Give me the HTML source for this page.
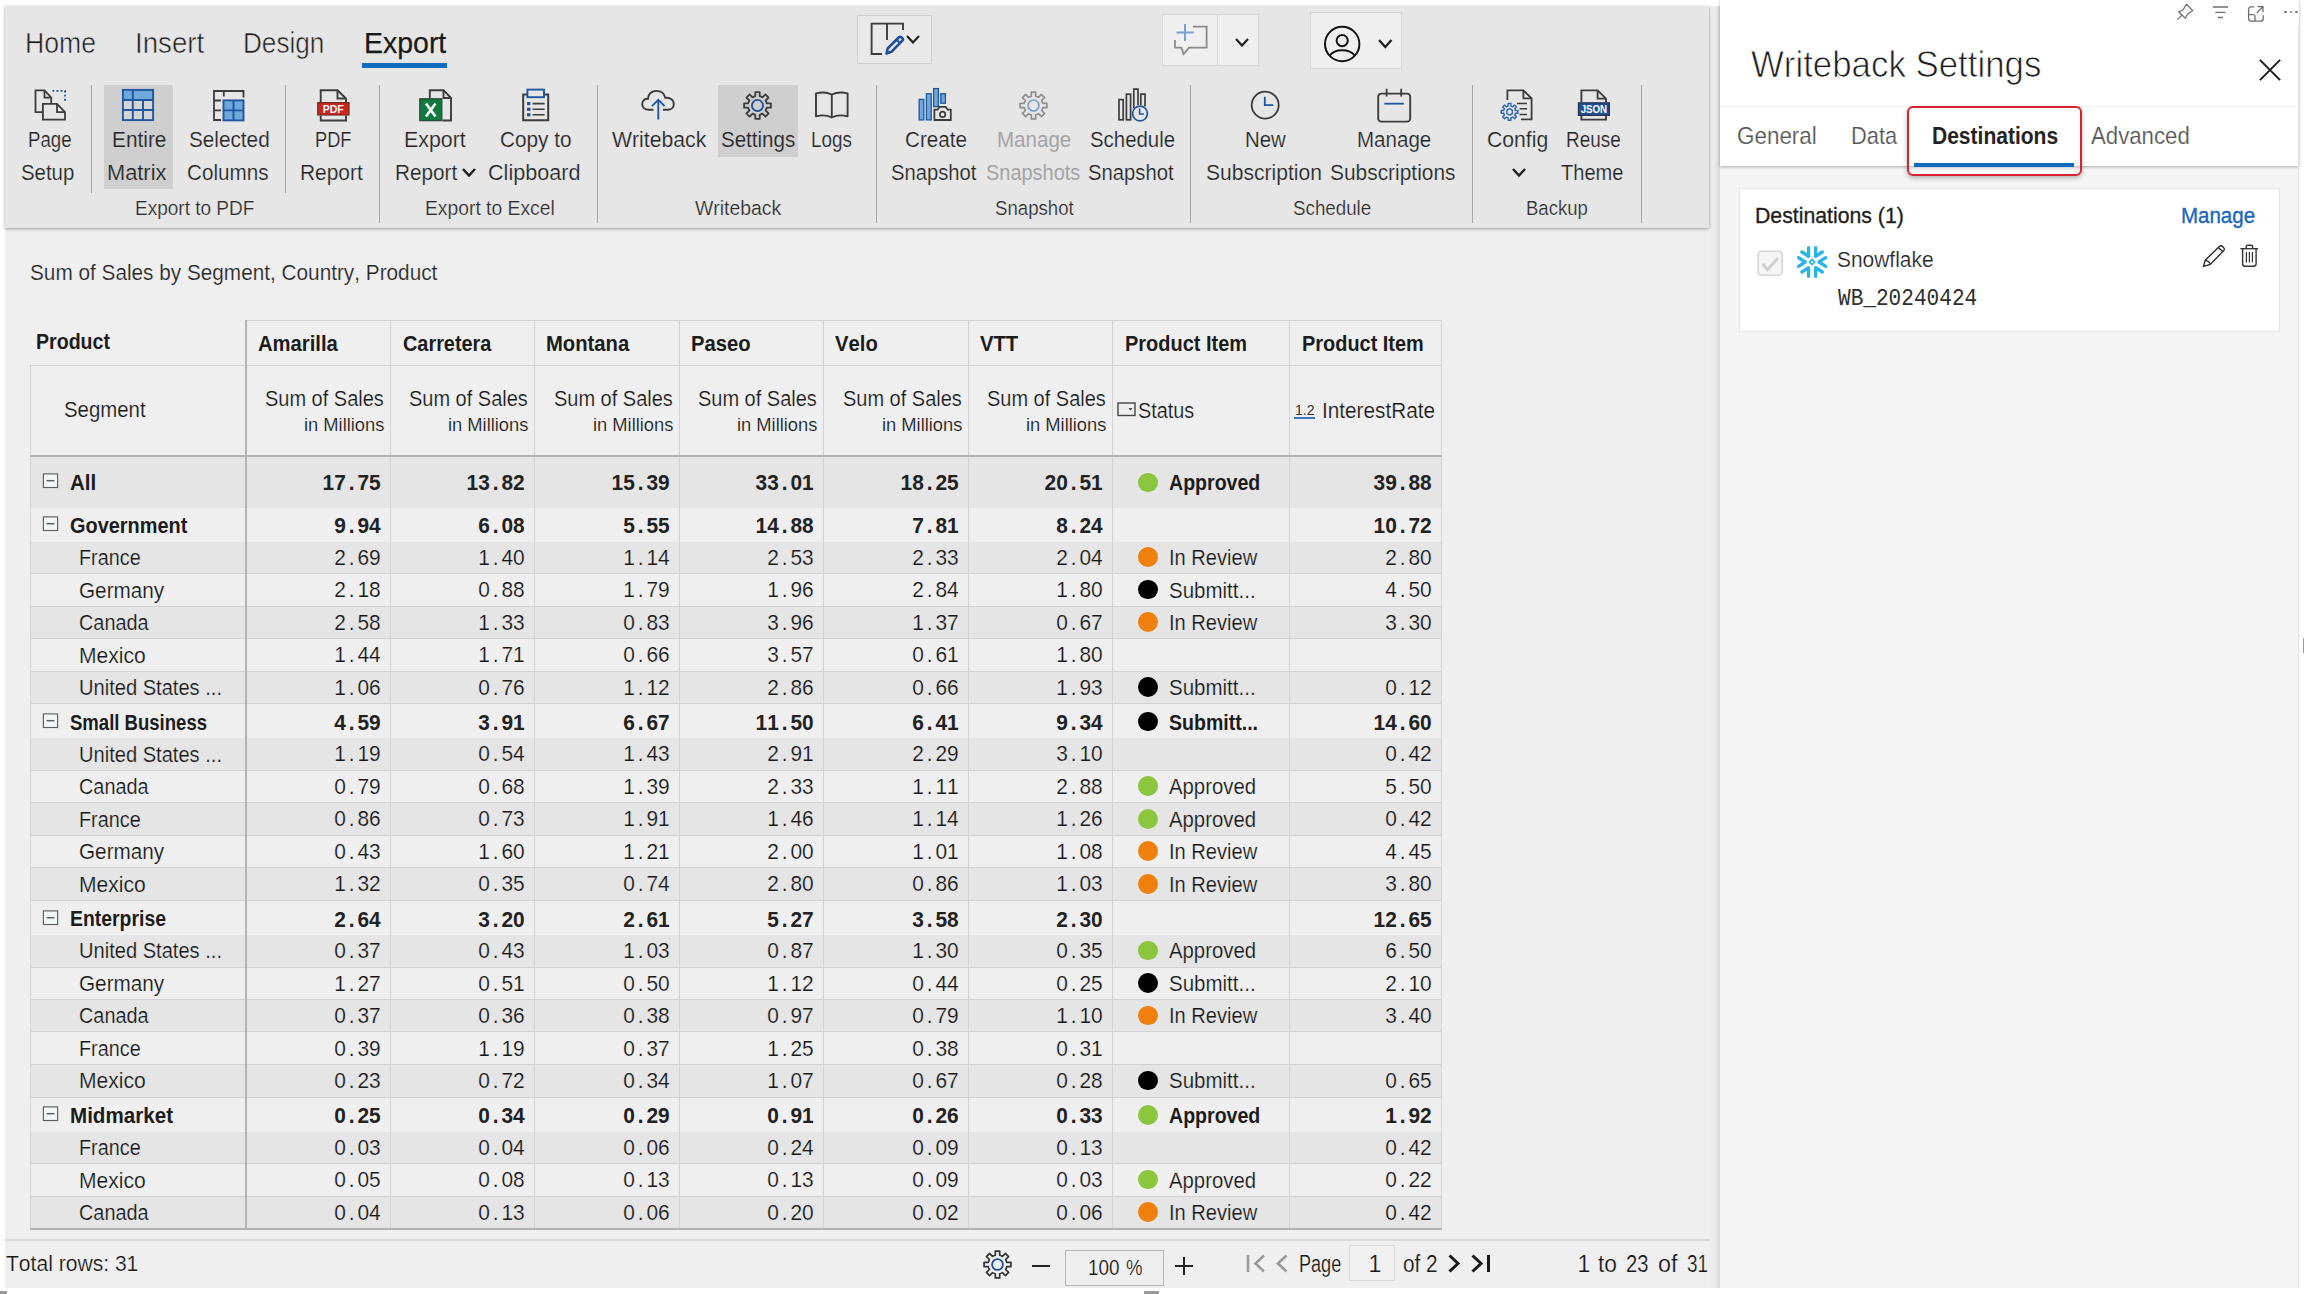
<!DOCTYPE html>
<html><head><meta charset="utf-8"><title>Writeback Settings</title><style>
html,body{margin:0;padding:0;background:#fff;}
body{width:2304px;height:1294px;position:relative;overflow:hidden;font-family:"Liberation Sans",sans-serif;color:#222;font-kerning:none;}
.t{position:absolute;white-space:nowrap;transform-origin:0 0;}
.r{position:absolute;display:block;}
.n i{display:inline-block;font-style:normal;text-align:center;width:12.45px;}
.n{transform:scaleX(0.9315);transform-origin:100% 0;}
</style></head><body>
<div class="r" style="left:5px;top:6px;width:1715px;height:1282px;background:#efefef;"></div>
<div class="r" style="left:1709px;top:6px;width:11px;height:1282px;background:linear-gradient(to right,#eeeeee 0%,#ebebeb 50%,#d8d8d8 100%);"></div>
<div class="r" style="left:5px;top:6px;width:1704px;height:222px;background:#e6e6e6;box-shadow:0 1px 3px rgba(0,0,0,.35);"></div>
<div class="t" style="left:25.00px;top:27.06px;font-size:30.4px;line-height:30.4px;transform:scaleX(0.8755);color:#1e1e1e;-webkit-text-stroke:0.55px #e6e6e6;">Home</div>
<div class="t" style="left:135.40px;top:27.06px;font-size:30.4px;line-height:30.4px;transform:scaleX(0.9105);color:#1e1e1e;-webkit-text-stroke:0.55px #e6e6e6;">Insert</div>
<div class="t" style="left:243.30px;top:27.06px;font-size:30.4px;line-height:30.4px;transform:scaleX(0.8592);color:#1e1e1e;-webkit-text-stroke:0.55px #e6e6e6;">Design</div>
<div class="t" style="left:363.50px;top:27.06px;font-size:30.4px;line-height:30.4px;transform:scaleX(0.9368);color:#1a1a1a;-webkit-text-stroke:0.25px #1a1a1a;">Export</div>
<div class="r" style="left:362px;top:63px;width:85px;height:5px;background:#0f6cbd;"></div>
<div class="r" style="left:857px;top:15px;width:75px;height:49px;background:#e9e9e9;box-sizing:border-box;border:1px solid #cfcfcf;"></div>
<div class="r" style="left:1162px;top:14px;width:97px;height:52px;background:#efefef;box-sizing:border-box;border:1px solid #d6d6d6;"></div>
<div class="r" style="left:1217px;top:15px;width:1px;height:50px;background:#d6d6d6;"></div>
<div class="r" style="left:1310px;top:12px;width:92px;height:57px;background:#efefef;box-sizing:border-box;border:1px solid #d6d6d6;"></div>
<div class="r" style="left:104px;top:85px;width:69px;height:104px;background:#cfcfcf;"></div>
<div class="r" style="left:718px;top:85px;width:80px;height:72px;background:#cfcfcf;"></div>
<div class="r" style="left:91px;top:85px;width:1px;height:108px;background:#a4a4a4;"></div>
<div class="r" style="left:285px;top:85px;width:1px;height:108px;background:#a4a4a4;"></div>
<div class="r" style="left:379px;top:85px;width:1px;height:138px;background:#a4a4a4;"></div>
<div class="r" style="left:597px;top:85px;width:1px;height:138px;background:#a4a4a4;"></div>
<div class="r" style="left:876px;top:85px;width:1px;height:138px;background:#a4a4a4;"></div>
<div class="r" style="left:1190px;top:85px;width:1px;height:138px;background:#a4a4a4;"></div>
<div class="r" style="left:1472px;top:85px;width:1px;height:138px;background:#a4a4a4;"></div>
<div class="r" style="left:1641px;top:85px;width:1px;height:138px;background:#a4a4a4;"></div>
<div class="t" style="left:28.10px;top:129.07px;font-size:22.5px;line-height:22.5px;transform:scaleX(0.8280);color:#252525;-webkit-text-stroke:0.2px #e6e6e6;">Page</div>
<div class="t" style="left:21.40px;top:162.07px;font-size:22.5px;line-height:22.5px;transform:scaleX(0.9068);color:#252525;-webkit-text-stroke:0.2px #e6e6e6;">Setup</div>
<div class="t" style="left:111.50px;top:129.07px;font-size:22.5px;line-height:22.5px;transform:scaleX(0.9255);color:#252525;-webkit-text-stroke:0.2px #cfcfcf;">Entire</div>
<div class="t" style="left:107.30px;top:162.07px;font-size:22.5px;line-height:22.5px;transform:scaleX(0.9697);color:#252525;-webkit-text-stroke:0.2px #cfcfcf;">Matrix</div>
<div class="t" style="left:188.80px;top:129.07px;font-size:22.5px;line-height:22.5px;transform:scaleX(0.9214);color:#252525;-webkit-text-stroke:0.2px #e6e6e6;">Selected</div>
<div class="t" style="left:186.70px;top:162.07px;font-size:22.5px;line-height:22.5px;transform:scaleX(0.9182);color:#252525;-webkit-text-stroke:0.2px #e6e6e6;">Columns</div>
<div class="t" style="left:315.10px;top:129.07px;font-size:22.5px;line-height:22.5px;transform:scaleX(0.8111);color:#252525;-webkit-text-stroke:0.2px #e6e6e6;">PDF</div>
<div class="t" style="left:300.00px;top:162.07px;font-size:22.5px;line-height:22.5px;transform:scaleX(0.9296);color:#252525;-webkit-text-stroke:0.2px #e6e6e6;">Report</div>
<div class="t" style="left:404.40px;top:129.07px;font-size:22.5px;line-height:22.5px;transform:scaleX(0.9489);color:#252525;-webkit-text-stroke:0.2px #e6e6e6;">Export</div>
<div class="t" style="left:395.30px;top:162.07px;font-size:22.5px;line-height:22.5px;transform:scaleX(0.9222);color:#252525;-webkit-text-stroke:0.2px #e6e6e6;">Report</div>
<div class="t" style="left:500.00px;top:129.07px;font-size:22.5px;line-height:22.5px;transform:scaleX(0.9231);color:#252525;-webkit-text-stroke:0.2px #e6e6e6;">Copy to</div>
<div class="t" style="left:487.80px;top:162.07px;font-size:22.5px;line-height:22.5px;transform:scaleX(0.9595);color:#252525;-webkit-text-stroke:0.2px #e6e6e6;">Clipboard</div>
<div class="t" style="left:611.80px;top:129.07px;font-size:22.5px;line-height:22.5px;transform:scaleX(0.9431);color:#252525;-webkit-text-stroke:0.2px #e6e6e6;">Writeback</div>
<div class="t" style="left:721.40px;top:129.07px;font-size:22.5px;line-height:22.5px;transform:scaleX(0.9129);color:#252525;-webkit-text-stroke:0.2px #cfcfcf;">Settings</div>
<div class="t" style="left:811.30px;top:129.07px;font-size:22.5px;line-height:22.5px;transform:scaleX(0.8366);color:#252525;-webkit-text-stroke:0.2px #e6e6e6;">Logs</div>
<div class="t" style="left:904.70px;top:129.07px;font-size:22.5px;line-height:22.5px;transform:scaleX(0.9178);color:#252525;-webkit-text-stroke:0.2px #e6e6e6;">Create</div>
<div class="t" style="left:891.20px;top:162.07px;font-size:22.5px;line-height:22.5px;transform:scaleX(0.8984);color:#252525;-webkit-text-stroke:0.2px #e6e6e6;">Snapshot</div>
<div class="t" style="left:1089.90px;top:129.07px;font-size:22.5px;line-height:22.5px;transform:scaleX(0.9070);color:#252525;-webkit-text-stroke:0.2px #e6e6e6;">Schedule</div>
<div class="t" style="left:1088.30px;top:162.07px;font-size:22.5px;line-height:22.5px;transform:scaleX(0.8994);color:#252525;-webkit-text-stroke:0.2px #e6e6e6;">Snapshot</div>
<div class="t" style="left:1245.00px;top:129.07px;font-size:22.5px;line-height:22.5px;transform:scaleX(0.9055);color:#252525;-webkit-text-stroke:0.2px #e6e6e6;">New</div>
<div class="t" style="left:1205.60px;top:162.07px;font-size:22.5px;line-height:22.5px;transform:scaleX(0.9361);color:#252525;-webkit-text-stroke:0.2px #e6e6e6;">Subscription</div>
<div class="t" style="left:1357.40px;top:129.07px;font-size:22.5px;line-height:22.5px;transform:scaleX(0.9135);color:#252525;-webkit-text-stroke:0.2px #e6e6e6;">Manage</div>
<div class="t" style="left:1330.10px;top:162.07px;font-size:22.5px;line-height:22.5px;transform:scaleX(0.9292);color:#252525;-webkit-text-stroke:0.2px #e6e6e6;">Subscriptions</div>
<div class="t" style="left:1487.10px;top:129.07px;font-size:22.5px;line-height:22.5px;transform:scaleX(0.9412);color:#252525;-webkit-text-stroke:0.2px #e6e6e6;">Config</div>
<div class="t" style="left:1565.80px;top:129.07px;font-size:22.5px;line-height:22.5px;transform:scaleX(0.8412);color:#252525;-webkit-text-stroke:0.2px #e6e6e6;">Reuse</div>
<div class="t" style="left:1560.60px;top:162.07px;font-size:22.5px;line-height:22.5px;transform:scaleX(0.8910);color:#252525;-webkit-text-stroke:0.2px #e6e6e6;">Theme</div>
<div class="t" style="left:997.40px;top:129.07px;font-size:22.5px;line-height:22.5px;transform:scaleX(0.9135);color:#a3a3a3;">Manage</div>
<div class="t" style="left:985.70px;top:162.07px;font-size:22.5px;line-height:22.5px;transform:scaleX(0.8870);color:#a3a3a3;">Snapshots</div>
<div class="t" style="left:134.60px;top:198.47px;font-size:20.5px;line-height:20.5px;transform:scaleX(0.9267);color:#2e2e2e;-webkit-text-stroke:0.2px #e6e6e6;">Export to PDF</div>
<div class="t" style="left:424.50px;top:198.47px;font-size:20.5px;line-height:20.5px;transform:scaleX(0.9408);color:#2e2e2e;-webkit-text-stroke:0.2px #e6e6e6;">Export to Excel</div>
<div class="t" style="left:694.60px;top:198.47px;font-size:20.5px;line-height:20.5px;transform:scaleX(0.9459);color:#2e2e2e;-webkit-text-stroke:0.2px #e6e6e6;">Writeback</div>
<div class="t" style="left:994.80px;top:198.47px;font-size:20.5px;line-height:20.5px;transform:scaleX(0.9086);color:#2e2e2e;-webkit-text-stroke:0.2px #e6e6e6;">Snapshot</div>
<div class="t" style="left:1293.10px;top:198.47px;font-size:20.5px;line-height:20.5px;transform:scaleX(0.9148);color:#2e2e2e;-webkit-text-stroke:0.2px #e6e6e6;">Schedule</div>
<div class="t" style="left:1526.20px;top:198.47px;font-size:20.5px;line-height:20.5px;transform:scaleX(0.9025);color:#2e2e2e;-webkit-text-stroke:0.2px #e6e6e6;">Backup</div>
<svg class="r" style="left:462px;top:168px;" width="14" height="9" viewBox="0 0 14 9"><path d="M1 1 L7.0 7.5 L13 1" fill="none" stroke="#222" stroke-width="2.5"/></svg>
<svg class="r" style="left:1512px;top:168px;" width="14" height="9" viewBox="0 0 14 9"><path d="M1 1 L7.0 7.5 L13 1" fill="none" stroke="#222" stroke-width="2.5"/></svg>
<svg class="r" style="left:34px;top:88px;" width="34" height="34" viewBox="0 0 34 34"><g fill="none" stroke="#3c3c3c" stroke-width="1.8" stroke-linejoin="miter">
<path d="M8.9 24.2 H1.5 V2.4 H10.5 L17.2 9.6 V15.9"/><path d="M10.5 2.4 V9.6 H17.2"/>
<path d="M8.9 15.9 H23 L31 24.2 V31.7 H8.9 Z"/><path d="M23 15.9 V24.2 H31"/>
</g><path d="M18.4 2.9 H31 V15" fill="none" stroke="#1e56a0" stroke-width="1.9" stroke-dasharray="1.9 2.2"/></svg>
<svg class="r" style="left:121px;top:88px;" width="34" height="34" viewBox="0 0 34 34"><rect x="1.5" y="1.5" width="31" height="31" fill="#d4d4d4"/>
<rect x="1.5" y="1.5" width="31" height="10" fill="#6fa8dc"/>
<g fill="none" stroke="#1e56a0" stroke-width="1.9"><rect x="1.9" y="1.9" width="30.2" height="30.2"/>
<path d="M1 12 H33 M1 22 H33 M11.8 1 V33 M22 12 V33"/></g></svg>
<svg class="r" style="left:212px;top:88px;" width="34" height="34" viewBox="0 0 34 34"><g fill="none" stroke="#3c3c3c" stroke-width="1.8"><path d="M2 33 V3 H31.5 V9.5"/><path d="M11.8 3 V8.5"/><path d="M2 12.5 H9 M2 22.3 H9 M2 32 H9"/></g>
<rect x="11.5" y="12.4" width="20" height="20" fill="#6fa8dc" stroke="#1e56a0" stroke-width="1.9"/>
<path d="M21.5 12 V33 M11 22.4 H32" stroke="#1e56a0" stroke-width="1.9"/></svg>
<svg class="r" style="left:316px;top:88px;" width="35" height="35" viewBox="0 0 35 35"><g fill="none" stroke="#3c3c3c" stroke-width="1.9"><path d="M4.7 14 V2.2 H21.5 L30 10.5 V14"/><path d="M21.5 2.2 V10.5 H30"/><path d="M4.7 27.5 V32.5 H30 V27.5"/></g>
<rect x="1.7" y="14.6" width="31.3" height="12.4" fill="#c9261d" stroke="#7a2a25" stroke-width="1.2"/>
<text x="17.3" y="25" font-family="Liberation Sans" font-weight="bold" font-size="10.8" fill="#fff" text-anchor="middle" textLength="21" lengthAdjust="spacingAndGlyphs">PDF</text></svg>
<svg class="r" style="left:418px;top:88px;" width="36" height="35" viewBox="0 0 36 35"><g fill="none" stroke="#3c3c3c" stroke-width="1.9"><path d="M11.8 10.5 V2.2 H25.5 L33 10 V32.5 H24.5"/><path d="M25.5 2.2 V10 H33"/></g>
<rect x="1.8" y="10.8" width="22" height="21.8" fill="#10793f" stroke="#2c4a3a" stroke-width="1.3"/>
<path d="M8 15.5 L17.5 28.5 M17.5 15.5 L8 28.5" stroke="#fff" stroke-width="2.6" fill="none"/></svg>
<svg class="r" style="left:521px;top:87px;" width="30" height="36" viewBox="0 0 30 36"><path d="M6.5 7.5 H2.2 V33.2 H27.2 V7.5 H23" fill="none" stroke="#3c3c3c" stroke-width="2"/>
<rect x="6.4" y="2.6" width="16.6" height="7.6" fill="#e6e6e6" stroke="#1e56a0" stroke-width="1.9"/>
<g fill="#1e56a0"><rect x="6" y="15" width="3.4" height="3.2"/><rect x="6" y="20.7" width="3.4" height="3.2"/><rect x="6" y="26.2" width="3.4" height="3.2"/></g>
<path d="M11.6 16.6 H23.6 M11.6 22.3 H23.6 M11.6 27.8 H23.6" stroke="#3c3c3c" stroke-width="1.6"/></svg>
<svg class="r" style="left:640px;top:88px;" width="37" height="34" viewBox="0 0 37 34"><path d="M13.5 21.8 H9 C4.5 21.8 2.2 19 2.2 16 C2.2 12.6 5 10.6 8 10.8 C8 6 11.8 2.9 16.5 2.9 C21 2.9 24.3 5.6 25.2 9.8 C29.5 9.3 33.8 11.5 33.8 16 C33.8 19.3 31.3 21.8 27.5 21.8 H23" fill="none" stroke="#3c3c3c" stroke-width="1.9"/>
<path d="M18.3 31.5 V12.5 M12 18.2 L18.3 11.9 L24.6 18.2" fill="none" stroke="#1e56a0" stroke-width="1.9"/></svg>
<svg class="r" style="left:743.4px;top:90.7px;" width="29" height="29" viewBox="0 0 29 29"><path d="M12.30 5.24 L12.30 1.08 L16.70 1.08 L16.70 5.24 A9.52 9.52 0 0 1 19.49 6.39 L22.43 3.45 L25.55 6.57 L22.61 9.51 A9.52 9.52 0 0 1 23.76 12.30 L27.92 12.30 L27.92 16.70 L23.76 16.70 A9.52 9.52 0 0 1 22.61 19.49 L25.55 22.43 L22.43 25.55 L19.49 22.61 A9.52 9.52 0 0 1 16.70 23.76 L16.70 27.92 L12.30 27.92 L12.30 23.76 A9.52 9.52 0 0 1 9.51 22.61 L6.57 25.55 L3.45 22.43 L6.39 19.49 A9.52 9.52 0 0 1 5.24 16.70 L1.08 16.70 L1.08 12.30 L5.24 12.30 A9.52 9.52 0 0 1 6.39 9.51 L3.45 6.57 L6.57 3.45 L9.51 6.39 A9.52 9.52 0 0 1 12.30 5.24 Z" fill="none" stroke="#3c3c3c" stroke-width="1.8" stroke-linejoin="round"/><circle cx="14.5" cy="14.5" r="5.60" fill="none" stroke="#1d4f99" stroke-width="1.8"/></svg>
<svg class="r" style="left:814px;top:90px;" width="36" height="30" viewBox="0 0 36 30"><g fill="none" stroke="#3c3c3c" stroke-width="1.9" stroke-linejoin="round"><path d="M17.8 4.5 C13 2.2 7 2.2 2 3.4 V26.4 C7 25 13 25 17.8 27.5 C22.6 25 28.6 25 33.6 26.4 V3.4 C28.6 2.2 22.6 2.2 17.8 4.5 Z"/><path d="M17.8 4.5 V27.5"/></g></svg>
<svg class="r" style="left:917px;top:87px;" width="36" height="35" viewBox="0 0 36 35"><g fill="#6fa8dc" stroke="#1e56a0" stroke-width="1.3">
<rect x="2.2" y="12.4" width="4.6" height="20.5"/><rect x="9.4" y="6.8" width="4.8" height="26.1"/><rect x="16.6" y="1.6" width="4.8" height="18"/><rect x="23.8" y="6.8" width="4.6" height="9.4"/></g>
<path d="M17.4 33 V22.6 H20.6 L22.6 19.8 H28.6 L30.6 22.6 H33.8 V33 Z" fill="#e6e6e6" stroke="#3c3c3c" stroke-width="1.8"/>
<circle cx="25.6" cy="27.4" r="2.7" fill="none" stroke="#3c3c3c" stroke-width="1.7"/></svg>
<svg class="r" style="left:1019.2px;top:90.6px;" width="29" height="29" viewBox="0 0 29 29"><path d="M12.30 5.24 L12.30 1.08 L16.70 1.08 L16.70 5.24 A9.52 9.52 0 0 1 19.49 6.39 L22.43 3.45 L25.55 6.57 L22.61 9.51 A9.52 9.52 0 0 1 23.76 12.30 L27.92 12.30 L27.92 16.70 L23.76 16.70 A9.52 9.52 0 0 1 22.61 19.49 L25.55 22.43 L22.43 25.55 L19.49 22.61 A9.52 9.52 0 0 1 16.70 23.76 L16.70 27.92 L12.30 27.92 L12.30 23.76 A9.52 9.52 0 0 1 9.51 22.61 L6.57 25.55 L3.45 22.43 L6.39 19.49 A9.52 9.52 0 0 1 5.24 16.70 L1.08 16.70 L1.08 12.30 L5.24 12.30 A9.52 9.52 0 0 1 6.39 9.51 L3.45 6.57 L6.57 3.45 L9.51 6.39 A9.52 9.52 0 0 1 12.30 5.24 Z" fill="none" stroke="#8f8f8f" stroke-width="1.7" stroke-linejoin="round"/><circle cx="14.5" cy="14.5" r="5.50" fill="none" stroke="#7a9bcd" stroke-width="1.6"/></svg>
<svg class="r" style="left:1116px;top:87px;" width="36" height="36" viewBox="0 0 36 36"><g fill="none" stroke="#3c3c3c" stroke-width="1.7">
<rect x="3" y="12.6" width="4.2" height="20.2"/><rect x="10.4" y="7.2" width="4.2" height="25.6"/><path d="M17.8 21 V2.2 H22 V18"/><path d="M24.8 18 V7.2 H29 V19.5"/></g>
<circle cx="24" cy="26.5" r="7.4" fill="#e6e6e6" stroke="#1e56a0" stroke-width="1.7"/><path d="M23.6 21.5 V27 H28" fill="none" stroke="#1e56a0" stroke-width="1.6"/></svg>
<svg class="r" style="left:1249px;top:89px;" width="32" height="32" viewBox="0 0 32 32"><circle cx="16.2" cy="16.1" r="13.5" fill="none" stroke="#3c3c3c" stroke-width="1.8"/><path d="M15.8 7.8 V16.2 H24.2" fill="none" stroke="#1e56a0" stroke-width="1.8"/></svg>
<svg class="r" style="left:1375px;top:87px;" width="38" height="37" viewBox="0 0 38 37"><rect x="3.2" y="6.6" width="32" height="28" rx="3.2" fill="none" stroke="#3c3c3c" stroke-width="1.9"/>
<path d="M11.6 1.8 V9.6 M26.2 1.8 V9.6" stroke="#3c3c3c" stroke-width="1.8"/><path d="M9.3 16.7 H28.8" stroke="#1e56a0" stroke-width="1.8"/></svg>
<svg class="r" style="left:1499px;top:88px;" width="36" height="35" viewBox="0 0 36 35"><g fill="none" stroke="#3c3c3c" stroke-width="1.8"><path d="M8.4 12 V2.4 H24.4 L32.6 10.4 V31.4 H22"/><path d="M24.4 2.4 V10.4 H32.6"/><path d="M18 15.4 H28 M20.5 20.8 H28 M20.5 26.4 H28" stroke-width="1.5"/></g>
<path d="M9.22 18.06 L9.22 15.51 L11.98 15.51 L11.98 18.06 A6.00 6.00 0 0 1 13.76 18.80 L15.56 17.00 L17.50 18.94 L15.70 20.74 A6.00 6.00 0 0 1 16.44 22.52 L18.99 22.52 L18.99 25.28 L16.44 25.28 A6.00 6.00 0 0 1 15.70 27.06 L17.50 28.86 L15.56 30.80 L13.76 29.00 A6.00 6.00 0 0 1 11.98 29.74 L11.98 32.29 L9.22 32.29 L9.22 29.74 A6.00 6.00 0 0 1 7.44 29.00 L5.64 30.80 L3.70 28.86 L5.50 27.06 A6.00 6.00 0 0 1 4.76 25.28 L2.21 25.28 L2.21 22.52 L4.76 22.52 A6.00 6.00 0 0 1 5.50 20.74 L3.70 18.94 L5.64 17.00 L7.44 18.80 A6.00 6.00 0 0 1 9.22 18.06 Z" fill="#e6e6e6" stroke="#2e64b0" stroke-width="1.4" stroke-linejoin="round"/><circle cx="10.6" cy="23.9" r="2.9" fill="none" stroke="#2e64b0" stroke-width="1.4"/></svg>
<svg class="r" style="left:1576px;top:88px;" width="36" height="35" viewBox="0 0 36 35"><g fill="none" stroke="#3c3c3c" stroke-width="1.9"><path d="M5.4 14 V2.4 H21.6 L30 10.6 V14"/><path d="M21.6 2.4 V10.6 H30"/><path d="M5.4 28 V31.6 H30 V28"/></g>
<rect x="2.4" y="14.8" width="31" height="12.6" fill="#1f4f98" stroke="#27344e" stroke-width="1.2"/>
<text x="17.9" y="25.2" font-family="Liberation Sans" font-weight="bold" font-size="10.4" fill="#fff" text-anchor="middle" textLength="26.5" lengthAdjust="spacingAndGlyphs">JSON</text></svg>
<svg class="r" style="left:868px;top:20px;" width="40" height="38" viewBox="0 0 40 38"><g fill="none" stroke="#3c3c3c" stroke-width="1.9"><path d="M14 34 H3.6 V3.6 H35 V10"/><path d="M19 3.6 V20"/></g>
<path d="M18.5 33.5 L19.8 28.2 L31 17.2 C32.5 15.8 36 18.9 34.4 20.6 L23.4 31.8 Z" fill="#e9e9e9" stroke="#1c4f9c" stroke-width="2.6" stroke-linejoin="round"/><path d="M28.6 19.8 L32 23.2" stroke="#1c4f9c" stroke-width="2"/></svg>
<svg class="r" style="left:906px;top:35px;" width="14" height="9" viewBox="0 0 14 9"><path d="M1 1 L7.0 7.5 L13 1" fill="none" stroke="#222" stroke-width="2.1"/></svg>
<svg class="r" style="left:1172px;top:22px;" width="38" height="36" viewBox="0 0 38 36"><path d="M21 4.6 H34.6 V25.6 H17 L11.6 32 L9.4 25.6 H3 V18" fill="none" stroke="#8a8a8a" stroke-width="1.8"/>
<path d="M13 2 V19 M4.4 10.4 H21.6" stroke="#7d9fd0" stroke-width="2"/></svg>
<svg class="r" style="left:1235px;top:38px;" width="14" height="9" viewBox="0 0 14 9"><path d="M1 1 L7.0 7.5 L13 1" fill="none" stroke="#222" stroke-width="2.2"/></svg>
<svg class="r" style="left:1322px;top:24px;" width="40" height="40" viewBox="0 0 40 40"><circle cx="20.2" cy="20" r="17.2" fill="none" stroke="#141414" stroke-width="2"/><circle cx="20.2" cy="16.6" r="5.6" fill="none" stroke="#141414" stroke-width="2"/>
<path d="M7.6 31.6 C13 24.4 27.4 24.4 32.8 31.6" fill="none" stroke="#141414" stroke-width="2"/></svg>
<svg class="r" style="left:1378px;top:39px;" width="14.5" height="9.5" viewBox="0 0 14.5 9.5"><path d="M1 1 L7.25 8.0 L13.5 1" fill="none" stroke="#222" stroke-width="2.3"/></svg>
<div class="t" style="left:30.20px;top:262.38px;font-size:22.5px;line-height:22.5px;transform:scaleX(0.9227);color:#262626;-webkit-text-stroke:0.2px #efefef;">Sum of Sales by Segment, Country, Product</div>
<div class="r" style="left:30px;top:457px;width:1412px;height:51px;background:#e5e5e5;"></div>
<div class="r" style="left:30px;top:542px;width:1412px;height:32px;background:#e5e5e5;"></div>
<div class="r" style="left:30px;top:573px;width:1412px;height:1px;background:#d2d2d2;"></div>
<div class="r" style="left:30px;top:606px;width:1412px;height:1px;background:#d2d2d2;"></div>
<div class="r" style="left:30px;top:607px;width:1412px;height:32px;background:#e5e5e5;"></div>
<div class="r" style="left:30px;top:638px;width:1412px;height:1px;background:#d2d2d2;"></div>
<div class="r" style="left:30px;top:671px;width:1412px;height:1px;background:#d2d2d2;"></div>
<div class="r" style="left:30px;top:672px;width:1412px;height:32px;background:#e5e5e5;"></div>
<div class="r" style="left:30px;top:703px;width:1412px;height:1px;background:#d2d2d2;"></div>
<div class="r" style="left:30px;top:738px;width:1412px;height:33px;background:#e5e5e5;"></div>
<div class="r" style="left:30px;top:770px;width:1412px;height:1px;background:#d2d2d2;"></div>
<div class="r" style="left:30px;top:802px;width:1412px;height:1px;background:#d2d2d2;"></div>
<div class="r" style="left:30px;top:803px;width:1412px;height:33px;background:#e5e5e5;"></div>
<div class="r" style="left:30px;top:835px;width:1412px;height:1px;background:#d2d2d2;"></div>
<div class="r" style="left:30px;top:867px;width:1412px;height:1px;background:#d2d2d2;"></div>
<div class="r" style="left:30px;top:868px;width:1412px;height:33px;background:#e5e5e5;"></div>
<div class="r" style="left:30px;top:900px;width:1412px;height:1px;background:#d2d2d2;"></div>
<div class="r" style="left:30px;top:935px;width:1412px;height:33px;background:#e5e5e5;"></div>
<div class="r" style="left:30px;top:967px;width:1412px;height:1px;background:#d2d2d2;"></div>
<div class="r" style="left:30px;top:999px;width:1412px;height:1px;background:#d2d2d2;"></div>
<div class="r" style="left:30px;top:1000px;width:1412px;height:32px;background:#e5e5e5;"></div>
<div class="r" style="left:30px;top:1031px;width:1412px;height:1px;background:#d2d2d2;"></div>
<div class="r" style="left:30px;top:1064px;width:1412px;height:1px;background:#d2d2d2;"></div>
<div class="r" style="left:30px;top:1065px;width:1412px;height:33px;background:#e5e5e5;"></div>
<div class="r" style="left:30px;top:1097px;width:1412px;height:1px;background:#d2d2d2;"></div>
<div class="r" style="left:30px;top:1132px;width:1412px;height:32px;background:#e5e5e5;"></div>
<div class="r" style="left:30px;top:1163px;width:1412px;height:1px;background:#d2d2d2;"></div>
<div class="r" style="left:30px;top:1196px;width:1412px;height:1px;background:#d2d2d2;"></div>
<div class="r" style="left:30px;top:1197px;width:1412px;height:32px;background:#e5e5e5;"></div>
<div class="r" style="left:30px;top:1228px;width:1412px;height:1px;background:#d2d2d2;"></div>
<div class="r" style="left:246px;top:320px;width:1196px;height:1px;background:#d2d2d2;"></div>
<div class="r" style="left:30px;top:365px;width:1412px;height:1px;background:#d2d2d2;"></div>
<div class="r" style="left:390px;top:320px;width:1px;height:909px;background:#d2d2d2;"></div>
<div class="r" style="left:534px;top:320px;width:1px;height:909px;background:#d2d2d2;"></div>
<div class="r" style="left:679px;top:320px;width:1px;height:909px;background:#d2d2d2;"></div>
<div class="r" style="left:823px;top:320px;width:1px;height:909px;background:#d2d2d2;"></div>
<div class="r" style="left:968px;top:320px;width:1px;height:909px;background:#d2d2d2;"></div>
<div class="r" style="left:1112px;top:320px;width:1px;height:909px;background:#d2d2d2;"></div>
<div class="r" style="left:1289px;top:320px;width:1px;height:909px;background:#d2d2d2;"></div>
<div class="r" style="left:1441px;top:320px;width:1px;height:909px;background:#d2d2d2;"></div>
<div class="r" style="left:30px;top:365px;width:1px;height:864px;background:#d2d2d2;"></div>
<div class="r" style="left:30px;top:455px;width:1412px;height:2px;background:#b3b3b3;"></div>
<div class="r" style="left:245px;top:320px;width:2px;height:910px;background:#b3b3b3;"></div>
<div class="r" style="left:30px;top:1228px;width:1412px;height:2px;background:#b3b3b3;"></div>
<div class="t" style="left:36.10px;top:332.23px;font-size:21.5px;line-height:21.5px;transform:scaleX(0.9111);font-weight:bold;color:#1c1c1c;">Product</div>
<div class="t" style="left:258.30px;top:333.73px;font-size:21.5px;line-height:21.5px;transform:scaleX(0.9414);font-weight:bold;color:#1c1c1c;">Amarilla</div>
<div class="t" style="left:402.60px;top:333.73px;font-size:21.5px;line-height:21.5px;transform:scaleX(0.9240);font-weight:bold;color:#1c1c1c;">Carretera</div>
<div class="t" style="left:546.40px;top:333.73px;font-size:21.5px;line-height:21.5px;transform:scaleX(0.9414);font-weight:bold;color:#1c1c1c;">Montana</div>
<div class="t" style="left:691.40px;top:333.73px;font-size:21.5px;line-height:21.5px;transform:scaleX(0.9414);font-weight:bold;color:#1c1c1c;">Paseo</div>
<div class="t" style="left:835.40px;top:333.73px;font-size:21.5px;line-height:21.5px;transform:scaleX(0.9414);font-weight:bold;color:#1c1c1c;">Velo</div>
<div class="t" style="left:980.40px;top:333.73px;font-size:21.5px;line-height:21.5px;transform:scaleX(0.9414);font-weight:bold;color:#1c1c1c;">VTT</div>
<div class="t" style="left:1125.20px;top:333.73px;font-size:21.5px;line-height:21.5px;transform:scaleX(0.9283);font-weight:bold;color:#1c1c1c;">Product Item</div>
<div class="t" style="left:1302.00px;top:333.73px;font-size:21.5px;line-height:21.5px;transform:scaleX(0.9268);font-weight:bold;color:#1c1c1c;">Product Item</div>
<div class="t" style="left:64.20px;top:399.38px;font-size:22.5px;line-height:22.5px;transform:scaleX(0.9061);color:#181818;-webkit-text-stroke:0.2px #efefef;">Segment</div>
<div class="t" style="left:265.40px;top:388.40px;font-size:22px;line-height:22px;transform:scaleX(0.9079);color:#181818;-webkit-text-stroke:0.2px #efefef;">Sum of Sales</div>
<div class="t" style="left:303.80px;top:416.64px;font-size:17.6px;line-height:17.6px;transform:scaleX(1.0406);color:#181818;-webkit-text-stroke:0.15px #efefef;">in Millions</div>
<div class="t" style="left:409.40px;top:388.40px;font-size:22px;line-height:22px;transform:scaleX(0.9079);color:#181818;-webkit-text-stroke:0.2px #efefef;">Sum of Sales</div>
<div class="t" style="left:447.80px;top:416.64px;font-size:17.6px;line-height:17.6px;transform:scaleX(1.0406);color:#181818;-webkit-text-stroke:0.15px #efefef;">in Millions</div>
<div class="t" style="left:554.40px;top:388.40px;font-size:22px;line-height:22px;transform:scaleX(0.9079);color:#181818;-webkit-text-stroke:0.2px #efefef;">Sum of Sales</div>
<div class="t" style="left:592.80px;top:416.64px;font-size:17.6px;line-height:17.6px;transform:scaleX(1.0406);color:#181818;-webkit-text-stroke:0.15px #efefef;">in Millions</div>
<div class="t" style="left:698.40px;top:388.40px;font-size:22px;line-height:22px;transform:scaleX(0.9079);color:#181818;-webkit-text-stroke:0.2px #efefef;">Sum of Sales</div>
<div class="t" style="left:736.80px;top:416.64px;font-size:17.6px;line-height:17.6px;transform:scaleX(1.0406);color:#181818;-webkit-text-stroke:0.15px #efefef;">in Millions</div>
<div class="t" style="left:843.40px;top:388.40px;font-size:22px;line-height:22px;transform:scaleX(0.9079);color:#181818;-webkit-text-stroke:0.2px #efefef;">Sum of Sales</div>
<div class="t" style="left:881.80px;top:416.64px;font-size:17.6px;line-height:17.6px;transform:scaleX(1.0406);color:#181818;-webkit-text-stroke:0.15px #efefef;">in Millions</div>
<div class="t" style="left:987.40px;top:388.40px;font-size:22px;line-height:22px;transform:scaleX(0.9079);color:#181818;-webkit-text-stroke:0.2px #efefef;">Sum of Sales</div>
<div class="t" style="left:1025.80px;top:416.64px;font-size:17.6px;line-height:17.6px;transform:scaleX(1.0406);color:#181818;-webkit-text-stroke:0.15px #efefef;">in Millions</div>
<div class="t" style="left:1137.80px;top:400.07px;font-size:22.5px;line-height:22.5px;transform:scaleX(0.8811);color:#181818;-webkit-text-stroke:0.2px #efefef;">Status</div>
<div class="t" style="left:1321.80px;top:400.07px;font-size:22.5px;line-height:22.5px;transform:scaleX(0.9219);color:#181818;-webkit-text-stroke:0.2px #efefef;">InterestRate</div>
<svg class="r" style="left:1117px;top:402px;" width="19" height="15" viewBox="0 0 19 15"><rect x="1" y="1" width="17" height="12.5" fill="none" stroke="#444" stroke-width="1.4"/><path d="M11.5 6 L15.5 6 L13.5 8.6 Z" fill="#444"/></svg>
<div class="t" style="left:1294.80px;top:404.07px;font-size:13.8px;line-height:13.8px;transform:scaleX(1.0166);color:#333;">1.2</div>
<div class="r" style="left:1294px;top:417px;width:21px;height:1.5px;background:#3b78c4;"></div>
<div class="t" style="left:69.80px;top:472.88px;font-size:21.5px;line-height:21.5px;transform:scaleX(0.9539);font-weight:bold;color:#1c1c1c;">All</div>
<svg class="r" style="left:42px;top:473.1px;" width="17" height="16" viewBox="0 0 17 16"><rect x="1.4" y="0.9" width="14.2" height="13.6" fill="#f3f6f7" stroke="#5e5e5e" stroke-width="1.15"/><path d="M4.6 7.7 H12.4" stroke="#5e5e5e" stroke-width="1.5"/></svg>
<div class="t n" style="left:246px;width:134.6px;top:472.21px;text-align:right;font-size:22.4px;line-height:22.4px;font-weight:bold;">17<i>.</i>75</div>
<div class="t n" style="left:390px;width:134.6px;top:472.21px;text-align:right;font-size:22.4px;line-height:22.4px;font-weight:bold;">13<i>.</i>82</div>
<div class="t n" style="left:534px;width:135.6px;top:472.21px;text-align:right;font-size:22.4px;line-height:22.4px;font-weight:bold;">15<i>.</i>39</div>
<div class="t n" style="left:679px;width:134.6px;top:472.21px;text-align:right;font-size:22.4px;line-height:22.4px;font-weight:bold;">33<i>.</i>01</div>
<div class="t n" style="left:823px;width:135.6px;top:472.21px;text-align:right;font-size:22.4px;line-height:22.4px;font-weight:bold;">18<i>.</i>25</div>
<div class="t n" style="left:968px;width:134.6px;top:472.21px;text-align:right;font-size:22.4px;line-height:22.4px;font-weight:bold;">20<i>.</i>51</div>
<div class="t n" style="left:1289px;width:142.6px;top:472.21px;text-align:right;font-size:22.4px;line-height:22.4px;font-weight:bold;">39<i>.</i>88</div>
<div class="r" style="left:1137.8px;top:472.7px;width:19.8px;height:19.8px;border-radius:50%;background:#8cc63f"></div>
<div class="t" style="left:1168.70px;top:473.38px;font-size:21.5px;line-height:21.5px;transform:scaleX(0.9098);font-weight:bold;color:#1c1c1c;">Approved</div>
<div class="t" style="left:69.80px;top:515.88px;font-size:21.5px;line-height:21.5px;transform:scaleX(0.9271);font-weight:bold;color:#1c1c1c;">Government</div>
<svg class="r" style="left:42px;top:516.1px;" width="17" height="16" viewBox="0 0 17 16"><rect x="1.4" y="0.9" width="14.2" height="13.6" fill="#f3f6f7" stroke="#5e5e5e" stroke-width="1.15"/><path d="M4.6 7.7 H12.4" stroke="#5e5e5e" stroke-width="1.5"/></svg>
<div class="t n" style="left:246px;width:134.6px;top:515.21px;text-align:right;font-size:22.4px;line-height:22.4px;font-weight:bold;">9<i>.</i>94</div>
<div class="t n" style="left:390px;width:134.6px;top:515.21px;text-align:right;font-size:22.4px;line-height:22.4px;font-weight:bold;">6<i>.</i>08</div>
<div class="t n" style="left:534px;width:135.6px;top:515.21px;text-align:right;font-size:22.4px;line-height:22.4px;font-weight:bold;">5<i>.</i>55</div>
<div class="t n" style="left:679px;width:134.6px;top:515.21px;text-align:right;font-size:22.4px;line-height:22.4px;font-weight:bold;">14<i>.</i>88</div>
<div class="t n" style="left:823px;width:135.6px;top:515.21px;text-align:right;font-size:22.4px;line-height:22.4px;font-weight:bold;">7<i>.</i>81</div>
<div class="t n" style="left:968px;width:134.6px;top:515.21px;text-align:right;font-size:22.4px;line-height:22.4px;font-weight:bold;">8<i>.</i>24</div>
<div class="t n" style="left:1289px;width:142.6px;top:515.21px;text-align:right;font-size:22.4px;line-height:22.4px;font-weight:bold;">10<i>.</i>72</div>
<div class="t" style="left:78.90px;top:547.08px;font-size:22.5px;line-height:22.5px;transform:scaleX(0.8810);color:#181818;-webkit-text-stroke:0.2px #e5e5e5;">France</div>
<div class="t n" style="left:246px;width:134.6px;top:546.76px;text-align:right;font-size:22.4px;line-height:22.4px;-webkit-text-stroke:0.18px #e5e5e5;color:#181818;">2<i>.</i>69</div>
<div class="t n" style="left:390px;width:134.6px;top:546.76px;text-align:right;font-size:22.4px;line-height:22.4px;-webkit-text-stroke:0.18px #e5e5e5;color:#181818;">1<i>.</i>40</div>
<div class="t n" style="left:534px;width:135.6px;top:546.76px;text-align:right;font-size:22.4px;line-height:22.4px;-webkit-text-stroke:0.18px #e5e5e5;color:#181818;">1<i>.</i>14</div>
<div class="t n" style="left:679px;width:134.6px;top:546.76px;text-align:right;font-size:22.4px;line-height:22.4px;-webkit-text-stroke:0.18px #e5e5e5;color:#181818;">2<i>.</i>53</div>
<div class="t n" style="left:823px;width:135.6px;top:546.76px;text-align:right;font-size:22.4px;line-height:22.4px;-webkit-text-stroke:0.18px #e5e5e5;color:#181818;">2<i>.</i>33</div>
<div class="t n" style="left:968px;width:134.6px;top:546.76px;text-align:right;font-size:22.4px;line-height:22.4px;-webkit-text-stroke:0.18px #e5e5e5;color:#181818;">2<i>.</i>04</div>
<div class="t n" style="left:1289px;width:142.6px;top:546.76px;text-align:right;font-size:22.4px;line-height:22.4px;-webkit-text-stroke:0.18px #e5e5e5;color:#181818;">2<i>.</i>80</div>
<div class="r" style="left:1137.8px;top:547.2px;width:19.8px;height:19.8px;border-radius:50%;background:#f0800e"></div>
<div class="t" style="left:1168.70px;top:547.18px;font-size:22.5px;line-height:22.5px;transform:scaleX(0.8934);color:#181818;-webkit-text-stroke:0.2px #e5e5e5;">In Review</div>
<div class="t" style="left:78.90px;top:579.58px;font-size:22.5px;line-height:22.5px;transform:scaleX(0.9208);color:#181818;-webkit-text-stroke:0.2px #efefef;">Germany</div>
<div class="t n" style="left:246px;width:134.6px;top:579.26px;text-align:right;font-size:22.4px;line-height:22.4px;-webkit-text-stroke:0.18px #efefef;color:#181818;">2<i>.</i>18</div>
<div class="t n" style="left:390px;width:134.6px;top:579.26px;text-align:right;font-size:22.4px;line-height:22.4px;-webkit-text-stroke:0.18px #efefef;color:#181818;">0<i>.</i>88</div>
<div class="t n" style="left:534px;width:135.6px;top:579.26px;text-align:right;font-size:22.4px;line-height:22.4px;-webkit-text-stroke:0.18px #efefef;color:#181818;">1<i>.</i>79</div>
<div class="t n" style="left:679px;width:134.6px;top:579.26px;text-align:right;font-size:22.4px;line-height:22.4px;-webkit-text-stroke:0.18px #efefef;color:#181818;">1<i>.</i>96</div>
<div class="t n" style="left:823px;width:135.6px;top:579.26px;text-align:right;font-size:22.4px;line-height:22.4px;-webkit-text-stroke:0.18px #efefef;color:#181818;">2<i>.</i>84</div>
<div class="t n" style="left:968px;width:134.6px;top:579.26px;text-align:right;font-size:22.4px;line-height:22.4px;-webkit-text-stroke:0.18px #efefef;color:#181818;">1<i>.</i>80</div>
<div class="t n" style="left:1289px;width:142.6px;top:579.26px;text-align:right;font-size:22.4px;line-height:22.4px;-webkit-text-stroke:0.18px #efefef;color:#181818;">4<i>.</i>50</div>
<div class="r" style="left:1137.8px;top:579.7px;width:19.8px;height:19.8px;border-radius:50%;background:#000"></div>
<div class="t" style="left:1168.70px;top:579.68px;font-size:22.5px;line-height:22.5px;transform:scaleX(0.9110);color:#181818;-webkit-text-stroke:0.2px #efefef;">Submitt...</div>
<div class="t" style="left:78.90px;top:612.08px;font-size:22.5px;line-height:22.5px;transform:scaleX(0.8838);color:#181818;-webkit-text-stroke:0.2px #e5e5e5;">Canada</div>
<div class="t n" style="left:246px;width:134.6px;top:611.76px;text-align:right;font-size:22.4px;line-height:22.4px;-webkit-text-stroke:0.18px #e5e5e5;color:#181818;">2<i>.</i>58</div>
<div class="t n" style="left:390px;width:134.6px;top:611.76px;text-align:right;font-size:22.4px;line-height:22.4px;-webkit-text-stroke:0.18px #e5e5e5;color:#181818;">1<i>.</i>33</div>
<div class="t n" style="left:534px;width:135.6px;top:611.76px;text-align:right;font-size:22.4px;line-height:22.4px;-webkit-text-stroke:0.18px #e5e5e5;color:#181818;">0<i>.</i>83</div>
<div class="t n" style="left:679px;width:134.6px;top:611.76px;text-align:right;font-size:22.4px;line-height:22.4px;-webkit-text-stroke:0.18px #e5e5e5;color:#181818;">3<i>.</i>96</div>
<div class="t n" style="left:823px;width:135.6px;top:611.76px;text-align:right;font-size:22.4px;line-height:22.4px;-webkit-text-stroke:0.18px #e5e5e5;color:#181818;">1<i>.</i>37</div>
<div class="t n" style="left:968px;width:134.6px;top:611.76px;text-align:right;font-size:22.4px;line-height:22.4px;-webkit-text-stroke:0.18px #e5e5e5;color:#181818;">0<i>.</i>67</div>
<div class="t n" style="left:1289px;width:142.6px;top:611.76px;text-align:right;font-size:22.4px;line-height:22.4px;-webkit-text-stroke:0.18px #e5e5e5;color:#181818;">3<i>.</i>30</div>
<div class="r" style="left:1137.8px;top:612.2px;width:19.8px;height:19.8px;border-radius:50%;background:#f0800e"></div>
<div class="t" style="left:1168.70px;top:612.18px;font-size:22.5px;line-height:22.5px;transform:scaleX(0.8934);color:#181818;-webkit-text-stroke:0.2px #e5e5e5;">In Review</div>
<div class="t" style="left:78.90px;top:644.58px;font-size:22.5px;line-height:22.5px;transform:scaleX(0.9359);color:#181818;-webkit-text-stroke:0.2px #efefef;">Mexico</div>
<div class="t n" style="left:246px;width:134.6px;top:644.26px;text-align:right;font-size:22.4px;line-height:22.4px;-webkit-text-stroke:0.18px #efefef;color:#181818;">1<i>.</i>44</div>
<div class="t n" style="left:390px;width:134.6px;top:644.26px;text-align:right;font-size:22.4px;line-height:22.4px;-webkit-text-stroke:0.18px #efefef;color:#181818;">1<i>.</i>71</div>
<div class="t n" style="left:534px;width:135.6px;top:644.26px;text-align:right;font-size:22.4px;line-height:22.4px;-webkit-text-stroke:0.18px #efefef;color:#181818;">0<i>.</i>66</div>
<div class="t n" style="left:679px;width:134.6px;top:644.26px;text-align:right;font-size:22.4px;line-height:22.4px;-webkit-text-stroke:0.18px #efefef;color:#181818;">3<i>.</i>57</div>
<div class="t n" style="left:823px;width:135.6px;top:644.26px;text-align:right;font-size:22.4px;line-height:22.4px;-webkit-text-stroke:0.18px #efefef;color:#181818;">0<i>.</i>61</div>
<div class="t n" style="left:968px;width:134.6px;top:644.26px;text-align:right;font-size:22.4px;line-height:22.4px;-webkit-text-stroke:0.18px #efefef;color:#181818;">1<i>.</i>80</div>
<div class="t" style="left:78.90px;top:677.08px;font-size:22.5px;line-height:22.5px;transform:scaleX(0.8933);color:#181818;-webkit-text-stroke:0.2px #e5e5e5;">United States ...</div>
<div class="t n" style="left:246px;width:134.6px;top:676.76px;text-align:right;font-size:22.4px;line-height:22.4px;-webkit-text-stroke:0.18px #e5e5e5;color:#181818;">1<i>.</i>06</div>
<div class="t n" style="left:390px;width:134.6px;top:676.76px;text-align:right;font-size:22.4px;line-height:22.4px;-webkit-text-stroke:0.18px #e5e5e5;color:#181818;">0<i>.</i>76</div>
<div class="t n" style="left:534px;width:135.6px;top:676.76px;text-align:right;font-size:22.4px;line-height:22.4px;-webkit-text-stroke:0.18px #e5e5e5;color:#181818;">1<i>.</i>12</div>
<div class="t n" style="left:679px;width:134.6px;top:676.76px;text-align:right;font-size:22.4px;line-height:22.4px;-webkit-text-stroke:0.18px #e5e5e5;color:#181818;">2<i>.</i>86</div>
<div class="t n" style="left:823px;width:135.6px;top:676.76px;text-align:right;font-size:22.4px;line-height:22.4px;-webkit-text-stroke:0.18px #e5e5e5;color:#181818;">0<i>.</i>66</div>
<div class="t n" style="left:968px;width:134.6px;top:676.76px;text-align:right;font-size:22.4px;line-height:22.4px;-webkit-text-stroke:0.18px #e5e5e5;color:#181818;">1<i>.</i>93</div>
<div class="t n" style="left:1289px;width:142.6px;top:676.76px;text-align:right;font-size:22.4px;line-height:22.4px;-webkit-text-stroke:0.18px #e5e5e5;color:#181818;">0<i>.</i>12</div>
<div class="r" style="left:1137.8px;top:677.2px;width:19.8px;height:19.8px;border-radius:50%;background:#000"></div>
<div class="t" style="left:1168.70px;top:677.18px;font-size:22.5px;line-height:22.5px;transform:scaleX(0.9110);color:#181818;-webkit-text-stroke:0.2px #e5e5e5;">Submitt...</div>
<div class="t" style="left:69.80px;top:712.53px;font-size:21.5px;line-height:21.5px;transform:scaleX(0.8620);font-weight:bold;color:#1c1c1c;">Small Business</div>
<svg class="r" style="left:42px;top:713.1px;" width="17" height="16" viewBox="0 0 17 16"><rect x="1.4" y="0.9" width="14.2" height="13.6" fill="#f3f6f7" stroke="#5e5e5e" stroke-width="1.15"/><path d="M4.6 7.7 H12.4" stroke="#5e5e5e" stroke-width="1.5"/></svg>
<div class="t n" style="left:246px;width:134.6px;top:711.86px;text-align:right;font-size:22.4px;line-height:22.4px;font-weight:bold;">4<i>.</i>59</div>
<div class="t n" style="left:390px;width:134.6px;top:711.86px;text-align:right;font-size:22.4px;line-height:22.4px;font-weight:bold;">3<i>.</i>91</div>
<div class="t n" style="left:534px;width:135.6px;top:711.86px;text-align:right;font-size:22.4px;line-height:22.4px;font-weight:bold;">6<i>.</i>67</div>
<div class="t n" style="left:679px;width:134.6px;top:711.86px;text-align:right;font-size:22.4px;line-height:22.4px;font-weight:bold;">11<i>.</i>50</div>
<div class="t n" style="left:823px;width:135.6px;top:711.86px;text-align:right;font-size:22.4px;line-height:22.4px;font-weight:bold;">6<i>.</i>41</div>
<div class="t n" style="left:968px;width:134.6px;top:711.86px;text-align:right;font-size:22.4px;line-height:22.4px;font-weight:bold;">9<i>.</i>34</div>
<div class="t n" style="left:1289px;width:142.6px;top:711.86px;text-align:right;font-size:22.4px;line-height:22.4px;font-weight:bold;">14<i>.</i>60</div>
<div class="r" style="left:1137.8px;top:711.5px;width:19.8px;height:19.8px;border-radius:50%;background:#000"></div>
<div class="t" style="left:1168.70px;top:713.03px;font-size:21.5px;line-height:21.5px;transform:scaleX(0.9088);font-weight:bold;color:#1c1c1c;">Submitt...</div>
<div class="t" style="left:78.90px;top:743.73px;font-size:22.5px;line-height:22.5px;transform:scaleX(0.8933);color:#181818;-webkit-text-stroke:0.2px #e5e5e5;">United States ...</div>
<div class="t n" style="left:246px;width:134.6px;top:743.41px;text-align:right;font-size:22.4px;line-height:22.4px;-webkit-text-stroke:0.18px #e5e5e5;color:#181818;">1<i>.</i>19</div>
<div class="t n" style="left:390px;width:134.6px;top:743.41px;text-align:right;font-size:22.4px;line-height:22.4px;-webkit-text-stroke:0.18px #e5e5e5;color:#181818;">0<i>.</i>54</div>
<div class="t n" style="left:534px;width:135.6px;top:743.41px;text-align:right;font-size:22.4px;line-height:22.4px;-webkit-text-stroke:0.18px #e5e5e5;color:#181818;">1<i>.</i>43</div>
<div class="t n" style="left:679px;width:134.6px;top:743.41px;text-align:right;font-size:22.4px;line-height:22.4px;-webkit-text-stroke:0.18px #e5e5e5;color:#181818;">2<i>.</i>91</div>
<div class="t n" style="left:823px;width:135.6px;top:743.41px;text-align:right;font-size:22.4px;line-height:22.4px;-webkit-text-stroke:0.18px #e5e5e5;color:#181818;">2<i>.</i>29</div>
<div class="t n" style="left:968px;width:134.6px;top:743.41px;text-align:right;font-size:22.4px;line-height:22.4px;-webkit-text-stroke:0.18px #e5e5e5;color:#181818;">3<i>.</i>10</div>
<div class="t n" style="left:1289px;width:142.6px;top:743.41px;text-align:right;font-size:22.4px;line-height:22.4px;-webkit-text-stroke:0.18px #e5e5e5;color:#181818;">0<i>.</i>42</div>
<div class="t" style="left:78.90px;top:776.23px;font-size:22.5px;line-height:22.5px;transform:scaleX(0.8838);color:#181818;-webkit-text-stroke:0.2px #efefef;">Canada</div>
<div class="t n" style="left:246px;width:134.6px;top:775.91px;text-align:right;font-size:22.4px;line-height:22.4px;-webkit-text-stroke:0.18px #efefef;color:#181818;">0<i>.</i>79</div>
<div class="t n" style="left:390px;width:134.6px;top:775.91px;text-align:right;font-size:22.4px;line-height:22.4px;-webkit-text-stroke:0.18px #efefef;color:#181818;">0<i>.</i>68</div>
<div class="t n" style="left:534px;width:135.6px;top:775.91px;text-align:right;font-size:22.4px;line-height:22.4px;-webkit-text-stroke:0.18px #efefef;color:#181818;">1<i>.</i>39</div>
<div class="t n" style="left:679px;width:134.6px;top:775.91px;text-align:right;font-size:22.4px;line-height:22.4px;-webkit-text-stroke:0.18px #efefef;color:#181818;">2<i>.</i>33</div>
<div class="t n" style="left:823px;width:135.6px;top:775.91px;text-align:right;font-size:22.4px;line-height:22.4px;-webkit-text-stroke:0.18px #efefef;color:#181818;">1<i>.</i>11</div>
<div class="t n" style="left:968px;width:134.6px;top:775.91px;text-align:right;font-size:22.4px;line-height:22.4px;-webkit-text-stroke:0.18px #efefef;color:#181818;">2<i>.</i>88</div>
<div class="t n" style="left:1289px;width:142.6px;top:775.91px;text-align:right;font-size:22.4px;line-height:22.4px;-webkit-text-stroke:0.18px #efefef;color:#181818;">5<i>.</i>50</div>
<div class="r" style="left:1137.8px;top:776.4px;width:19.8px;height:19.8px;border-radius:50%;background:#8cc63f"></div>
<div class="t" style="left:1168.70px;top:776.33px;font-size:22.5px;line-height:22.5px;transform:scaleX(0.9034);color:#181818;-webkit-text-stroke:0.2px #efefef;">Approved</div>
<div class="t" style="left:78.90px;top:808.73px;font-size:22.5px;line-height:22.5px;transform:scaleX(0.8810);color:#181818;-webkit-text-stroke:0.2px #e5e5e5;">France</div>
<div class="t n" style="left:246px;width:134.6px;top:808.41px;text-align:right;font-size:22.4px;line-height:22.4px;-webkit-text-stroke:0.18px #e5e5e5;color:#181818;">0<i>.</i>86</div>
<div class="t n" style="left:390px;width:134.6px;top:808.41px;text-align:right;font-size:22.4px;line-height:22.4px;-webkit-text-stroke:0.18px #e5e5e5;color:#181818;">0<i>.</i>73</div>
<div class="t n" style="left:534px;width:135.6px;top:808.41px;text-align:right;font-size:22.4px;line-height:22.4px;-webkit-text-stroke:0.18px #e5e5e5;color:#181818;">1<i>.</i>91</div>
<div class="t n" style="left:679px;width:134.6px;top:808.41px;text-align:right;font-size:22.4px;line-height:22.4px;-webkit-text-stroke:0.18px #e5e5e5;color:#181818;">1<i>.</i>46</div>
<div class="t n" style="left:823px;width:135.6px;top:808.41px;text-align:right;font-size:22.4px;line-height:22.4px;-webkit-text-stroke:0.18px #e5e5e5;color:#181818;">1<i>.</i>14</div>
<div class="t n" style="left:968px;width:134.6px;top:808.41px;text-align:right;font-size:22.4px;line-height:22.4px;-webkit-text-stroke:0.18px #e5e5e5;color:#181818;">1<i>.</i>26</div>
<div class="t n" style="left:1289px;width:142.6px;top:808.41px;text-align:right;font-size:22.4px;line-height:22.4px;-webkit-text-stroke:0.18px #e5e5e5;color:#181818;">0<i>.</i>42</div>
<div class="r" style="left:1137.8px;top:808.9px;width:19.8px;height:19.8px;border-radius:50%;background:#8cc63f"></div>
<div class="t" style="left:1168.70px;top:808.83px;font-size:22.5px;line-height:22.5px;transform:scaleX(0.9034);color:#181818;-webkit-text-stroke:0.2px #e5e5e5;">Approved</div>
<div class="t" style="left:78.90px;top:841.23px;font-size:22.5px;line-height:22.5px;transform:scaleX(0.9208);color:#181818;-webkit-text-stroke:0.2px #efefef;">Germany</div>
<div class="t n" style="left:246px;width:134.6px;top:840.91px;text-align:right;font-size:22.4px;line-height:22.4px;-webkit-text-stroke:0.18px #efefef;color:#181818;">0<i>.</i>43</div>
<div class="t n" style="left:390px;width:134.6px;top:840.91px;text-align:right;font-size:22.4px;line-height:22.4px;-webkit-text-stroke:0.18px #efefef;color:#181818;">1<i>.</i>60</div>
<div class="t n" style="left:534px;width:135.6px;top:840.91px;text-align:right;font-size:22.4px;line-height:22.4px;-webkit-text-stroke:0.18px #efefef;color:#181818;">1<i>.</i>21</div>
<div class="t n" style="left:679px;width:134.6px;top:840.91px;text-align:right;font-size:22.4px;line-height:22.4px;-webkit-text-stroke:0.18px #efefef;color:#181818;">2<i>.</i>00</div>
<div class="t n" style="left:823px;width:135.6px;top:840.91px;text-align:right;font-size:22.4px;line-height:22.4px;-webkit-text-stroke:0.18px #efefef;color:#181818;">1<i>.</i>01</div>
<div class="t n" style="left:968px;width:134.6px;top:840.91px;text-align:right;font-size:22.4px;line-height:22.4px;-webkit-text-stroke:0.18px #efefef;color:#181818;">1<i>.</i>08</div>
<div class="t n" style="left:1289px;width:142.6px;top:840.91px;text-align:right;font-size:22.4px;line-height:22.4px;-webkit-text-stroke:0.18px #efefef;color:#181818;">4<i>.</i>45</div>
<div class="r" style="left:1137.8px;top:841.4px;width:19.8px;height:19.8px;border-radius:50%;background:#f0800e"></div>
<div class="t" style="left:1168.70px;top:841.33px;font-size:22.5px;line-height:22.5px;transform:scaleX(0.8934);color:#181818;-webkit-text-stroke:0.2px #efefef;">In Review</div>
<div class="t" style="left:78.90px;top:873.73px;font-size:22.5px;line-height:22.5px;transform:scaleX(0.9359);color:#181818;-webkit-text-stroke:0.2px #e5e5e5;">Mexico</div>
<div class="t n" style="left:246px;width:134.6px;top:873.41px;text-align:right;font-size:22.4px;line-height:22.4px;-webkit-text-stroke:0.18px #e5e5e5;color:#181818;">1<i>.</i>32</div>
<div class="t n" style="left:390px;width:134.6px;top:873.41px;text-align:right;font-size:22.4px;line-height:22.4px;-webkit-text-stroke:0.18px #e5e5e5;color:#181818;">0<i>.</i>35</div>
<div class="t n" style="left:534px;width:135.6px;top:873.41px;text-align:right;font-size:22.4px;line-height:22.4px;-webkit-text-stroke:0.18px #e5e5e5;color:#181818;">0<i>.</i>74</div>
<div class="t n" style="left:679px;width:134.6px;top:873.41px;text-align:right;font-size:22.4px;line-height:22.4px;-webkit-text-stroke:0.18px #e5e5e5;color:#181818;">2<i>.</i>80</div>
<div class="t n" style="left:823px;width:135.6px;top:873.41px;text-align:right;font-size:22.4px;line-height:22.4px;-webkit-text-stroke:0.18px #e5e5e5;color:#181818;">0<i>.</i>86</div>
<div class="t n" style="left:968px;width:134.6px;top:873.41px;text-align:right;font-size:22.4px;line-height:22.4px;-webkit-text-stroke:0.18px #e5e5e5;color:#181818;">1<i>.</i>03</div>
<div class="t n" style="left:1289px;width:142.6px;top:873.41px;text-align:right;font-size:22.4px;line-height:22.4px;-webkit-text-stroke:0.18px #e5e5e5;color:#181818;">3<i>.</i>80</div>
<div class="r" style="left:1137.8px;top:873.9px;width:19.8px;height:19.8px;border-radius:50%;background:#f0800e"></div>
<div class="t" style="left:1168.70px;top:873.83px;font-size:22.5px;line-height:22.5px;transform:scaleX(0.8934);color:#181818;-webkit-text-stroke:0.2px #e5e5e5;">In Review</div>
<div class="t" style="left:69.80px;top:909.18px;font-size:21.5px;line-height:21.5px;transform:scaleX(0.9025);font-weight:bold;color:#1c1c1c;">Enterprise</div>
<svg class="r" style="left:42px;top:910.1px;" width="17" height="16" viewBox="0 0 17 16"><rect x="1.4" y="0.9" width="14.2" height="13.6" fill="#f3f6f7" stroke="#5e5e5e" stroke-width="1.15"/><path d="M4.6 7.7 H12.4" stroke="#5e5e5e" stroke-width="1.5"/></svg>
<div class="t n" style="left:246px;width:134.6px;top:908.51px;text-align:right;font-size:22.4px;line-height:22.4px;font-weight:bold;">2<i>.</i>64</div>
<div class="t n" style="left:390px;width:134.6px;top:908.51px;text-align:right;font-size:22.4px;line-height:22.4px;font-weight:bold;">3<i>.</i>20</div>
<div class="t n" style="left:534px;width:135.6px;top:908.51px;text-align:right;font-size:22.4px;line-height:22.4px;font-weight:bold;">2<i>.</i>61</div>
<div class="t n" style="left:679px;width:134.6px;top:908.51px;text-align:right;font-size:22.4px;line-height:22.4px;font-weight:bold;">5<i>.</i>27</div>
<div class="t n" style="left:823px;width:135.6px;top:908.51px;text-align:right;font-size:22.4px;line-height:22.4px;font-weight:bold;">3<i>.</i>58</div>
<div class="t n" style="left:968px;width:134.6px;top:908.51px;text-align:right;font-size:22.4px;line-height:22.4px;font-weight:bold;">2<i>.</i>30</div>
<div class="t n" style="left:1289px;width:142.6px;top:908.51px;text-align:right;font-size:22.4px;line-height:22.4px;font-weight:bold;">12<i>.</i>65</div>
<div class="t" style="left:78.90px;top:940.38px;font-size:22.5px;line-height:22.5px;transform:scaleX(0.8933);color:#181818;-webkit-text-stroke:0.2px #e5e5e5;">United States ...</div>
<div class="t n" style="left:246px;width:134.6px;top:940.06px;text-align:right;font-size:22.4px;line-height:22.4px;-webkit-text-stroke:0.18px #e5e5e5;color:#181818;">0<i>.</i>37</div>
<div class="t n" style="left:390px;width:134.6px;top:940.06px;text-align:right;font-size:22.4px;line-height:22.4px;-webkit-text-stroke:0.18px #e5e5e5;color:#181818;">0<i>.</i>43</div>
<div class="t n" style="left:534px;width:135.6px;top:940.06px;text-align:right;font-size:22.4px;line-height:22.4px;-webkit-text-stroke:0.18px #e5e5e5;color:#181818;">1<i>.</i>03</div>
<div class="t n" style="left:679px;width:134.6px;top:940.06px;text-align:right;font-size:22.4px;line-height:22.4px;-webkit-text-stroke:0.18px #e5e5e5;color:#181818;">0<i>.</i>87</div>
<div class="t n" style="left:823px;width:135.6px;top:940.06px;text-align:right;font-size:22.4px;line-height:22.4px;-webkit-text-stroke:0.18px #e5e5e5;color:#181818;">1<i>.</i>30</div>
<div class="t n" style="left:968px;width:134.6px;top:940.06px;text-align:right;font-size:22.4px;line-height:22.4px;-webkit-text-stroke:0.18px #e5e5e5;color:#181818;">0<i>.</i>35</div>
<div class="t n" style="left:1289px;width:142.6px;top:940.06px;text-align:right;font-size:22.4px;line-height:22.4px;-webkit-text-stroke:0.18px #e5e5e5;color:#181818;">6<i>.</i>50</div>
<div class="r" style="left:1137.8px;top:940.5px;width:19.8px;height:19.8px;border-radius:50%;background:#8cc63f"></div>
<div class="t" style="left:1168.70px;top:940.48px;font-size:22.5px;line-height:22.5px;transform:scaleX(0.9034);color:#181818;-webkit-text-stroke:0.2px #e5e5e5;">Approved</div>
<div class="t" style="left:78.90px;top:972.88px;font-size:22.5px;line-height:22.5px;transform:scaleX(0.9208);color:#181818;-webkit-text-stroke:0.2px #efefef;">Germany</div>
<div class="t n" style="left:246px;width:134.6px;top:972.56px;text-align:right;font-size:22.4px;line-height:22.4px;-webkit-text-stroke:0.18px #efefef;color:#181818;">1<i>.</i>27</div>
<div class="t n" style="left:390px;width:134.6px;top:972.56px;text-align:right;font-size:22.4px;line-height:22.4px;-webkit-text-stroke:0.18px #efefef;color:#181818;">0<i>.</i>51</div>
<div class="t n" style="left:534px;width:135.6px;top:972.56px;text-align:right;font-size:22.4px;line-height:22.4px;-webkit-text-stroke:0.18px #efefef;color:#181818;">0<i>.</i>50</div>
<div class="t n" style="left:679px;width:134.6px;top:972.56px;text-align:right;font-size:22.4px;line-height:22.4px;-webkit-text-stroke:0.18px #efefef;color:#181818;">1<i>.</i>12</div>
<div class="t n" style="left:823px;width:135.6px;top:972.56px;text-align:right;font-size:22.4px;line-height:22.4px;-webkit-text-stroke:0.18px #efefef;color:#181818;">0<i>.</i>44</div>
<div class="t n" style="left:968px;width:134.6px;top:972.56px;text-align:right;font-size:22.4px;line-height:22.4px;-webkit-text-stroke:0.18px #efefef;color:#181818;">0<i>.</i>25</div>
<div class="t n" style="left:1289px;width:142.6px;top:972.56px;text-align:right;font-size:22.4px;line-height:22.4px;-webkit-text-stroke:0.18px #efefef;color:#181818;">2<i>.</i>10</div>
<div class="r" style="left:1137.8px;top:973.0px;width:19.8px;height:19.8px;border-radius:50%;background:#000"></div>
<div class="t" style="left:1168.70px;top:972.98px;font-size:22.5px;line-height:22.5px;transform:scaleX(0.9110);color:#181818;-webkit-text-stroke:0.2px #efefef;">Submitt...</div>
<div class="t" style="left:78.90px;top:1005.38px;font-size:22.5px;line-height:22.5px;transform:scaleX(0.8838);color:#181818;-webkit-text-stroke:0.2px #e5e5e5;">Canada</div>
<div class="t n" style="left:246px;width:134.6px;top:1005.06px;text-align:right;font-size:22.4px;line-height:22.4px;-webkit-text-stroke:0.18px #e5e5e5;color:#181818;">0<i>.</i>37</div>
<div class="t n" style="left:390px;width:134.6px;top:1005.06px;text-align:right;font-size:22.4px;line-height:22.4px;-webkit-text-stroke:0.18px #e5e5e5;color:#181818;">0<i>.</i>36</div>
<div class="t n" style="left:534px;width:135.6px;top:1005.06px;text-align:right;font-size:22.4px;line-height:22.4px;-webkit-text-stroke:0.18px #e5e5e5;color:#181818;">0<i>.</i>38</div>
<div class="t n" style="left:679px;width:134.6px;top:1005.06px;text-align:right;font-size:22.4px;line-height:22.4px;-webkit-text-stroke:0.18px #e5e5e5;color:#181818;">0<i>.</i>97</div>
<div class="t n" style="left:823px;width:135.6px;top:1005.06px;text-align:right;font-size:22.4px;line-height:22.4px;-webkit-text-stroke:0.18px #e5e5e5;color:#181818;">0<i>.</i>79</div>
<div class="t n" style="left:968px;width:134.6px;top:1005.06px;text-align:right;font-size:22.4px;line-height:22.4px;-webkit-text-stroke:0.18px #e5e5e5;color:#181818;">1<i>.</i>10</div>
<div class="t n" style="left:1289px;width:142.6px;top:1005.06px;text-align:right;font-size:22.4px;line-height:22.4px;-webkit-text-stroke:0.18px #e5e5e5;color:#181818;">3<i>.</i>40</div>
<div class="r" style="left:1137.8px;top:1005.5px;width:19.8px;height:19.8px;border-radius:50%;background:#f0800e"></div>
<div class="t" style="left:1168.70px;top:1005.48px;font-size:22.5px;line-height:22.5px;transform:scaleX(0.8934);color:#181818;-webkit-text-stroke:0.2px #e5e5e5;">In Review</div>
<div class="t" style="left:78.90px;top:1037.88px;font-size:22.5px;line-height:22.5px;transform:scaleX(0.8810);color:#181818;-webkit-text-stroke:0.2px #efefef;">France</div>
<div class="t n" style="left:246px;width:134.6px;top:1037.56px;text-align:right;font-size:22.4px;line-height:22.4px;-webkit-text-stroke:0.18px #efefef;color:#181818;">0<i>.</i>39</div>
<div class="t n" style="left:390px;width:134.6px;top:1037.56px;text-align:right;font-size:22.4px;line-height:22.4px;-webkit-text-stroke:0.18px #efefef;color:#181818;">1<i>.</i>19</div>
<div class="t n" style="left:534px;width:135.6px;top:1037.56px;text-align:right;font-size:22.4px;line-height:22.4px;-webkit-text-stroke:0.18px #efefef;color:#181818;">0<i>.</i>37</div>
<div class="t n" style="left:679px;width:134.6px;top:1037.56px;text-align:right;font-size:22.4px;line-height:22.4px;-webkit-text-stroke:0.18px #efefef;color:#181818;">1<i>.</i>25</div>
<div class="t n" style="left:823px;width:135.6px;top:1037.56px;text-align:right;font-size:22.4px;line-height:22.4px;-webkit-text-stroke:0.18px #efefef;color:#181818;">0<i>.</i>38</div>
<div class="t n" style="left:968px;width:134.6px;top:1037.56px;text-align:right;font-size:22.4px;line-height:22.4px;-webkit-text-stroke:0.18px #efefef;color:#181818;">0<i>.</i>31</div>
<div class="t" style="left:78.90px;top:1070.38px;font-size:22.5px;line-height:22.5px;transform:scaleX(0.9359);color:#181818;-webkit-text-stroke:0.2px #e5e5e5;">Mexico</div>
<div class="t n" style="left:246px;width:134.6px;top:1070.06px;text-align:right;font-size:22.4px;line-height:22.4px;-webkit-text-stroke:0.18px #e5e5e5;color:#181818;">0<i>.</i>23</div>
<div class="t n" style="left:390px;width:134.6px;top:1070.06px;text-align:right;font-size:22.4px;line-height:22.4px;-webkit-text-stroke:0.18px #e5e5e5;color:#181818;">0<i>.</i>72</div>
<div class="t n" style="left:534px;width:135.6px;top:1070.06px;text-align:right;font-size:22.4px;line-height:22.4px;-webkit-text-stroke:0.18px #e5e5e5;color:#181818;">0<i>.</i>34</div>
<div class="t n" style="left:679px;width:134.6px;top:1070.06px;text-align:right;font-size:22.4px;line-height:22.4px;-webkit-text-stroke:0.18px #e5e5e5;color:#181818;">1<i>.</i>07</div>
<div class="t n" style="left:823px;width:135.6px;top:1070.06px;text-align:right;font-size:22.4px;line-height:22.4px;-webkit-text-stroke:0.18px #e5e5e5;color:#181818;">0<i>.</i>67</div>
<div class="t n" style="left:968px;width:134.6px;top:1070.06px;text-align:right;font-size:22.4px;line-height:22.4px;-webkit-text-stroke:0.18px #e5e5e5;color:#181818;">0<i>.</i>28</div>
<div class="t n" style="left:1289px;width:142.6px;top:1070.06px;text-align:right;font-size:22.4px;line-height:22.4px;-webkit-text-stroke:0.18px #e5e5e5;color:#181818;">0<i>.</i>65</div>
<div class="r" style="left:1137.8px;top:1070.5px;width:19.8px;height:19.8px;border-radius:50%;background:#000"></div>
<div class="t" style="left:1168.70px;top:1070.47px;font-size:22.5px;line-height:22.5px;transform:scaleX(0.9110);color:#181818;-webkit-text-stroke:0.2px #e5e5e5;">Submitt...</div>
<div class="t" style="left:69.80px;top:1105.83px;font-size:21.5px;line-height:21.5px;transform:scaleX(0.9577);font-weight:bold;color:#1c1c1c;">Midmarket</div>
<svg class="r" style="left:42px;top:1106.1px;" width="17" height="16" viewBox="0 0 17 16"><rect x="1.4" y="0.9" width="14.2" height="13.6" fill="#f3f6f7" stroke="#5e5e5e" stroke-width="1.15"/><path d="M4.6 7.7 H12.4" stroke="#5e5e5e" stroke-width="1.5"/></svg>
<div class="t n" style="left:246px;width:134.6px;top:1105.16px;text-align:right;font-size:22.4px;line-height:22.4px;font-weight:bold;">0<i>.</i>25</div>
<div class="t n" style="left:390px;width:134.6px;top:1105.16px;text-align:right;font-size:22.4px;line-height:22.4px;font-weight:bold;">0<i>.</i>34</div>
<div class="t n" style="left:534px;width:135.6px;top:1105.16px;text-align:right;font-size:22.4px;line-height:22.4px;font-weight:bold;">0<i>.</i>29</div>
<div class="t n" style="left:679px;width:134.6px;top:1105.16px;text-align:right;font-size:22.4px;line-height:22.4px;font-weight:bold;">0<i>.</i>91</div>
<div class="t n" style="left:823px;width:135.6px;top:1105.16px;text-align:right;font-size:22.4px;line-height:22.4px;font-weight:bold;">0<i>.</i>26</div>
<div class="t n" style="left:968px;width:134.6px;top:1105.16px;text-align:right;font-size:22.4px;line-height:22.4px;font-weight:bold;">0<i>.</i>33</div>
<div class="t n" style="left:1289px;width:142.6px;top:1105.16px;text-align:right;font-size:22.4px;line-height:22.4px;font-weight:bold;">1<i>.</i>92</div>
<div class="r" style="left:1137.8px;top:1104.8px;width:19.8px;height:19.8px;border-radius:50%;background:#8cc63f"></div>
<div class="t" style="left:1168.70px;top:1106.33px;font-size:21.5px;line-height:21.5px;transform:scaleX(0.9098);font-weight:bold;color:#1c1c1c;">Approved</div>
<div class="t" style="left:78.90px;top:1137.03px;font-size:22.5px;line-height:22.5px;transform:scaleX(0.8810);color:#181818;-webkit-text-stroke:0.2px #e5e5e5;">France</div>
<div class="t n" style="left:246px;width:134.6px;top:1136.71px;text-align:right;font-size:22.4px;line-height:22.4px;-webkit-text-stroke:0.18px #e5e5e5;color:#181818;">0<i>.</i>03</div>
<div class="t n" style="left:390px;width:134.6px;top:1136.71px;text-align:right;font-size:22.4px;line-height:22.4px;-webkit-text-stroke:0.18px #e5e5e5;color:#181818;">0<i>.</i>04</div>
<div class="t n" style="left:534px;width:135.6px;top:1136.71px;text-align:right;font-size:22.4px;line-height:22.4px;-webkit-text-stroke:0.18px #e5e5e5;color:#181818;">0<i>.</i>06</div>
<div class="t n" style="left:679px;width:134.6px;top:1136.71px;text-align:right;font-size:22.4px;line-height:22.4px;-webkit-text-stroke:0.18px #e5e5e5;color:#181818;">0<i>.</i>24</div>
<div class="t n" style="left:823px;width:135.6px;top:1136.71px;text-align:right;font-size:22.4px;line-height:22.4px;-webkit-text-stroke:0.18px #e5e5e5;color:#181818;">0<i>.</i>09</div>
<div class="t n" style="left:968px;width:134.6px;top:1136.71px;text-align:right;font-size:22.4px;line-height:22.4px;-webkit-text-stroke:0.18px #e5e5e5;color:#181818;">0<i>.</i>13</div>
<div class="t n" style="left:1289px;width:142.6px;top:1136.71px;text-align:right;font-size:22.4px;line-height:22.4px;-webkit-text-stroke:0.18px #e5e5e5;color:#181818;">0<i>.</i>42</div>
<div class="t" style="left:78.90px;top:1169.53px;font-size:22.5px;line-height:22.5px;transform:scaleX(0.9359);color:#181818;-webkit-text-stroke:0.2px #efefef;">Mexico</div>
<div class="t n" style="left:246px;width:134.6px;top:1169.21px;text-align:right;font-size:22.4px;line-height:22.4px;-webkit-text-stroke:0.18px #efefef;color:#181818;">0<i>.</i>05</div>
<div class="t n" style="left:390px;width:134.6px;top:1169.21px;text-align:right;font-size:22.4px;line-height:22.4px;-webkit-text-stroke:0.18px #efefef;color:#181818;">0<i>.</i>08</div>
<div class="t n" style="left:534px;width:135.6px;top:1169.21px;text-align:right;font-size:22.4px;line-height:22.4px;-webkit-text-stroke:0.18px #efefef;color:#181818;">0<i>.</i>13</div>
<div class="t n" style="left:679px;width:134.6px;top:1169.21px;text-align:right;font-size:22.4px;line-height:22.4px;-webkit-text-stroke:0.18px #efefef;color:#181818;">0<i>.</i>13</div>
<div class="t n" style="left:823px;width:135.6px;top:1169.21px;text-align:right;font-size:22.4px;line-height:22.4px;-webkit-text-stroke:0.18px #efefef;color:#181818;">0<i>.</i>09</div>
<div class="t n" style="left:968px;width:134.6px;top:1169.21px;text-align:right;font-size:22.4px;line-height:22.4px;-webkit-text-stroke:0.18px #efefef;color:#181818;">0<i>.</i>03</div>
<div class="t n" style="left:1289px;width:142.6px;top:1169.21px;text-align:right;font-size:22.4px;line-height:22.4px;-webkit-text-stroke:0.18px #efefef;color:#181818;">0<i>.</i>22</div>
<div class="r" style="left:1137.8px;top:1169.7px;width:19.8px;height:19.8px;border-radius:50%;background:#8cc63f"></div>
<div class="t" style="left:1168.70px;top:1169.62px;font-size:22.5px;line-height:22.5px;transform:scaleX(0.9034);color:#181818;-webkit-text-stroke:0.2px #efefef;">Approved</div>
<div class="t" style="left:78.90px;top:1202.03px;font-size:22.5px;line-height:22.5px;transform:scaleX(0.8838);color:#181818;-webkit-text-stroke:0.2px #e5e5e5;">Canada</div>
<div class="t n" style="left:246px;width:134.6px;top:1201.71px;text-align:right;font-size:22.4px;line-height:22.4px;-webkit-text-stroke:0.18px #e5e5e5;color:#181818;">0<i>.</i>04</div>
<div class="t n" style="left:390px;width:134.6px;top:1201.71px;text-align:right;font-size:22.4px;line-height:22.4px;-webkit-text-stroke:0.18px #e5e5e5;color:#181818;">0<i>.</i>13</div>
<div class="t n" style="left:534px;width:135.6px;top:1201.71px;text-align:right;font-size:22.4px;line-height:22.4px;-webkit-text-stroke:0.18px #e5e5e5;color:#181818;">0<i>.</i>06</div>
<div class="t n" style="left:679px;width:134.6px;top:1201.71px;text-align:right;font-size:22.4px;line-height:22.4px;-webkit-text-stroke:0.18px #e5e5e5;color:#181818;">0<i>.</i>20</div>
<div class="t n" style="left:823px;width:135.6px;top:1201.71px;text-align:right;font-size:22.4px;line-height:22.4px;-webkit-text-stroke:0.18px #e5e5e5;color:#181818;">0<i>.</i>02</div>
<div class="t n" style="left:968px;width:134.6px;top:1201.71px;text-align:right;font-size:22.4px;line-height:22.4px;-webkit-text-stroke:0.18px #e5e5e5;color:#181818;">0<i>.</i>06</div>
<div class="t n" style="left:1289px;width:142.6px;top:1201.71px;text-align:right;font-size:22.4px;line-height:22.4px;-webkit-text-stroke:0.18px #e5e5e5;color:#181818;">0<i>.</i>42</div>
<div class="r" style="left:1137.8px;top:1202.2px;width:19.8px;height:19.8px;border-radius:50%;background:#f0800e"></div>
<div class="t" style="left:1168.70px;top:1202.12px;font-size:22.5px;line-height:22.5px;transform:scaleX(0.8934);color:#181818;-webkit-text-stroke:0.2px #e5e5e5;">In Review</div>
<div class="r" style="left:5px;top:1239px;width:1705px;height:2px;background:#d9d9d9;"></div>
<div class="t" style="left:6.00px;top:1253.08px;font-size:22.5px;line-height:22.5px;transform:scaleX(0.9364);color:#181818;-webkit-text-stroke:0.2px #efefef;">Total rows: 31</div>
<svg class="r" style="left:983px;top:1250px;" width="29" height="29" viewBox="0 0 29 29"><path d="M12.30 5.24 L12.30 1.08 L16.70 1.08 L16.70 5.24 A9.52 9.52 0 0 1 19.49 6.39 L22.43 3.45 L25.55 6.57 L22.61 9.51 A9.52 9.52 0 0 1 23.76 12.30 L27.92 12.30 L27.92 16.70 L23.76 16.70 A9.52 9.52 0 0 1 22.61 19.49 L25.55 22.43 L22.43 25.55 L19.49 22.61 A9.52 9.52 0 0 1 16.70 23.76 L16.70 27.92 L12.30 27.92 L12.30 23.76 A9.52 9.52 0 0 1 9.51 22.61 L6.57 25.55 L3.45 22.43 L6.39 19.49 A9.52 9.52 0 0 1 5.24 16.70 L1.08 16.70 L1.08 12.30 L5.24 12.30 A9.52 9.52 0 0 1 6.39 9.51 L3.45 6.57 L6.57 3.45 L9.51 6.39 A9.52 9.52 0 0 1 12.30 5.24 Z" fill="none" stroke="#333" stroke-width="1.7" stroke-linejoin="round"/><circle cx="14.5" cy="14.5" r="5.40" fill="none" stroke="#1e4f94" stroke-width="1.8"/></svg>
<div class="r" style="left:1065px;top:1250px;width:99px;height:36px;background:#efefef;box-sizing:border-box;border:1.5px solid #b9b9b9;"></div>
<div class="t" style="left:1088.00px;top:1257.08px;font-size:22.5px;line-height:22.5px;transform:scaleX(0.8396);color:#181818;-webkit-text-stroke:0.2px #efefef;">100</div>
<div class="t" style="left:1125.80px;top:1257.08px;font-size:22.5px;line-height:22.5px;transform:scaleX(0.8240);color:#181818;-webkit-text-stroke:0.2px #efefef;">%</div>
<div class="r" style="left:1032px;top:1265px;width:18px;height:2px;background:#222;"></div>
<div class="r" style="left:1175px;top:1265px;width:18px;height:2px;background:#222;"></div>
<div class="r" style="left:1183px;top:1257px;width:2px;height:18px;background:#222;"></div>
<svg class="r" style="left:1246px;top:1253px;" width="20" height="20" viewBox="0 0 20 20"><path d="M2 2 V19 M18 2.5 L9.5 10.5 L18 18.5" fill="none" stroke="#999" stroke-width="2.6"/></svg>
<svg class="r" style="left:1275px;top:1253px;" width="14" height="20" viewBox="0 0 14 20"><path d="M11.5 2.5 L3 10.5 L11.5 18.5" fill="none" stroke="#999" stroke-width="2.6"/></svg>
<div class="t" style="left:1299.40px;top:1252.65px;font-size:23px;line-height:23px;transform:scaleX(0.7858);color:#181818;-webkit-text-stroke:0.2px #efefef;">Page</div>
<div class="r" style="left:1349px;top:1245px;width:46px;height:36px;background:#f0f0f0;box-sizing:border-box;border:1.5px solid #d8d8d8;"></div>
<div class="t" style="left:1368.50px;top:1252.65px;font-size:23px;line-height:23px;color:#181818;-webkit-text-stroke:0.2px #efefef;">1</div>
<div class="t" style="left:1403.00px;top:1252.65px;font-size:23px;line-height:23px;transform:scaleX(0.9022);color:#181818;-webkit-text-stroke:0.2px #efefef;">of 2</div>
<svg class="r" style="left:1447px;top:1253px;" width="14" height="20" viewBox="0 0 14 20"><path d="M2.5 2.5 L11 10.5 L2.5 18.5" fill="none" stroke="#1a1a1a" stroke-width="3"/></svg>
<svg class="r" style="left:1470px;top:1253px;" width="21" height="20" viewBox="0 0 21 20"><path d="M2.5 2.5 L11 10.5 L2.5 18.5 M18.5 2 V19" fill="none" stroke="#1a1a1a" stroke-width="3"/></svg>
<div class="t" style="left:1577.50px;top:1252.65px;font-size:23px;line-height:23px;color:#181818;-webkit-text-stroke:0.2px #efefef;">1</div>
<div class="t" style="left:1597.50px;top:1252.65px;font-size:23px;line-height:23px;transform:scaleX(0.9893);color:#181818;-webkit-text-stroke:0.2px #efefef;">to</div>
<div class="t" style="left:1626.00px;top:1252.65px;font-size:23px;line-height:23px;transform:scaleX(0.8793);color:#181818;-webkit-text-stroke:0.2px #efefef;">23</div>
<div class="t" style="left:1658.00px;top:1252.65px;font-size:23px;line-height:23px;transform:scaleX(1.0154);color:#181818;-webkit-text-stroke:0.2px #efefef;">of</div>
<div class="t" style="left:1687.00px;top:1252.65px;font-size:23px;line-height:23px;transform:scaleX(0.8207);color:#181818;-webkit-text-stroke:0.2px #efefef;">31</div>
<div class="r" style="left:1144px;top:1291px;width:15px;height:3px;background:#9a9a9a;"></div>
<div class="r" style="left:0px;top:1291px;width:7px;height:3px;background:#9a9a9a;"></div>
<div class="r" style="left:2303px;top:638px;width:1px;height:15px;background:#9a9a9a;"></div>
<div class="r" style="left:1720px;top:0px;width:579px;height:1288px;background:#f5f5f5;"></div>
<div class="r" style="left:1720px;top:0px;width:579px;height:166px;background:#ffffff;box-shadow:0 1px 3px rgba(0,0,0,.30);"></div>
<div class="r" style="left:2298px;top:26px;width:1px;height:1262px;background:#e3e3e6;"></div>
<div class="r" style="left:1720px;top:106px;width:579px;height:1px;background:#f1f1f1;"></div>
<div class="t" style="left:1751.00px;top:47.06px;font-size:36.4px;line-height:36.4px;transform:scaleX(0.9569);color:#1e1e1e;-webkit-text-stroke:0.75px #fff;">Writeback Settings</div>
<svg class="r" style="left:2257.5px;top:58px;" width="24" height="24" viewBox="0 0 24 24"><path d="M1.9 1.9 L22.1 22.1 M22.1 1.9 L1.9 22.1" stroke="#1c1c1c" stroke-width="2" fill="none"/></svg>
<div class="t" style="left:1737.20px;top:123.99px;font-size:24.6px;line-height:24.6px;transform:scaleX(0.9118);color:#555;-webkit-text-stroke:0.2px #fff;">General</div>
<div class="t" style="left:1851.30px;top:123.99px;font-size:24.6px;line-height:24.6px;transform:scaleX(0.8871);color:#555;-webkit-text-stroke:0.2px #fff;">Data</div>
<div class="t" style="left:1931.70px;top:124.33px;font-size:24.2px;line-height:24.2px;transform:scaleX(0.8691);font-weight:bold;color:#242424;">Destinations</div>
<div class="t" style="left:2091.40px;top:123.99px;font-size:24.6px;line-height:24.6px;transform:scaleX(0.9030);color:#555;-webkit-text-stroke:0.2px #fff;">Advanced</div>
<div class="r" style="left:1914px;top:163px;width:160px;height:4px;background:#0f6cbd;"></div>
<div class="r" style="left:1907px;top:106px;width:175px;height:70px;background:transparent;box-sizing:border-box;border:2px solid #d8232f;border-radius:6px;box-shadow:0 2px 5px rgba(0,0,0,.28);"></div>
<div class="r" style="left:1739px;top:188px;width:541px;height:144px;background:#ffffff;box-sizing:border-box;border:1.5px solid #e4e4e4;"></div>
<div class="t" style="left:1755.00px;top:205.07px;font-size:22.5px;line-height:22.5px;transform:scaleX(0.9444);color:#1f1f1f;-webkit-text-stroke:0.35px #1f1f1f;">Destinations (1)</div>
<div class="t" style="left:2181.30px;top:205.07px;font-size:22.5px;line-height:22.5px;transform:scaleX(0.9110);color:#1766c2;-webkit-text-stroke:0.35px #1766c2;">Manage</div>
<svg class="r" style="left:1757px;top:250px;" width="27" height="27" viewBox="0 0 27 27"><rect x="1.2" y="1.2" width="24" height="24" rx="3.5" fill="#f5f5f5" stroke="#d6d6d6" stroke-width="1.6"/><path d="M5.5 14 L10.5 19.5 L21 8" fill="none" stroke="#cfcfcf" stroke-width="3"/></svg>
<div class="t" style="left:1837.00px;top:247.52px;font-size:22.8px;line-height:22.8px;transform:scaleX(0.9181);color:#262626;-webkit-text-stroke:0.2px #fff;">Snowflake</div>
<div class="t" style="left:1838.00px;top:287.16px;font-size:24.2px;line-height:24.2px;transform:scaleX(0.8718);font-family:'Liberation Mono',monospace;color:#2f2f2f;">WB_20240424</div>
<svg class="r" style="left:2175px;top:2px;" width="20" height="20" viewBox="0 0 20 20"><path d="M11.5 2.3 L17.8 8.6 L12.4 12.2 L10.3 16.2 L3.6 9.8 L7.9 8 Z" fill="none" stroke="#6e6e6e" stroke-width="1.25" stroke-linejoin="round"/><path d="M6.8 13.2 L2.4 17.6" stroke="#6e6e6e" stroke-width="1.25"/></svg>
<svg class="r" style="left:2211px;top:4px;" width="19" height="16" viewBox="0 0 19 16"><path d="M1.9 3 H17.1 M4.3 8.3 H14.4 M7 13.5 H12" stroke="#6e6e6e" stroke-width="1.35"/></svg>
<svg class="r" style="left:2246px;top:4px;" width="20" height="20" viewBox="0 0 20 20"><g fill="none" stroke="#6e6e6e" stroke-width="1.3"><path d="M8.3 2.9 H5.4 C3.6 2.9 2.6 4 2.6 5.6 V14.4 C2.6 16.3 3.7 17.1 5.4 17.1 H14.5 C16.2 17.1 17.2 16.2 17.2 14.4 V11.3"/><path d="M2.6 10.6 H7 C8.3 10.6 9 11.3 9 12.6 V17.1"/><path d="M10.8 8.9 L16.9 2.8 M11.6 2.7 H17 V8.2"/></g></svg>
<div class="r" style="left:2284.35px;top:10.55px;width:2.9px;height:2.9px;border-radius:50%;background:#7a7a7a"></div>
<div class="r" style="left:2289.60px;top:10.55px;width:2.9px;height:2.9px;border-radius:50%;background:#7a7a7a"></div>
<div class="r" style="left:2294.85px;top:10.55px;width:2.9px;height:2.9px;border-radius:50%;background:#7a7a7a"></div>
<svg class="r" style="left:1795px;top:245px;" width="34" height="34" viewBox="0 0 34 34"><g transform="translate(17.1 17)" fill="none" stroke="#29b5e8" stroke-width="3.3" stroke-linecap="round" stroke-linejoin="round">
<path d="M-3.55 -14.3 V-5.6 L-10.2 -10"/><path d="M3.55 -14.3 V-5.6 L10.2 -10"/>
<path d="M-3.55 14.3 V5.6 L-10.2 10"/><path d="M3.55 14.3 V5.6 L10.2 10"/>
<path d="M-13.6 -4.3 L-6.9 0 L-13.6 4.3"/><path d="M13.6 -4.3 L6.9 0 L13.6 4.3"/>
<path d="M0 -2.6 L2.6 0 L0 2.6 L-2.6 0 Z" stroke-width="1.6" stroke-linejoin="miter"/></g></svg>
<svg class="r" style="left:2200px;top:243px;" width="28" height="27" viewBox="0 0 28 27"><g fill="none" stroke="#262626" stroke-width="1.35" stroke-linejoin="round">
<path d="M5.2 17.3 L19.6 3.3 C21.4 1.5 25.6 5.4 23.9 7.4 L10.3 21.4 L3.5 23.4 Z"/><path d="M5.2 17.3 C7.6 17.6 9.8 19.4 10.3 21.4"/><path d="M18.3 4.6 L22.7 8.6"/></g></svg>
<svg class="r" style="left:2239px;top:243px;" width="21" height="26" viewBox="0 0 21 26"><g fill="none" stroke="#333" stroke-width="1.4"><path d="M1.4 5.7 H19.1"/><path d="M7.3 5.5 V3.6 C7.3 2.6 7.8 2.3 8.6 2.3 H12.2 C13 2.3 13.6 2.6 13.6 3.6 V5.5"/>
<path d="M3.6 5.8 V20.8 C3.6 22.4 4.4 23.2 5.8 23.2 H14.8 C16.2 23.2 17.1 22.4 17.1 20.8 V5.8"/><path d="M7.4 9 V19.6 M10.4 9 V19.6 M13.4 9 V19.6" stroke-width="1.2"/></g></svg>
</body></html>
